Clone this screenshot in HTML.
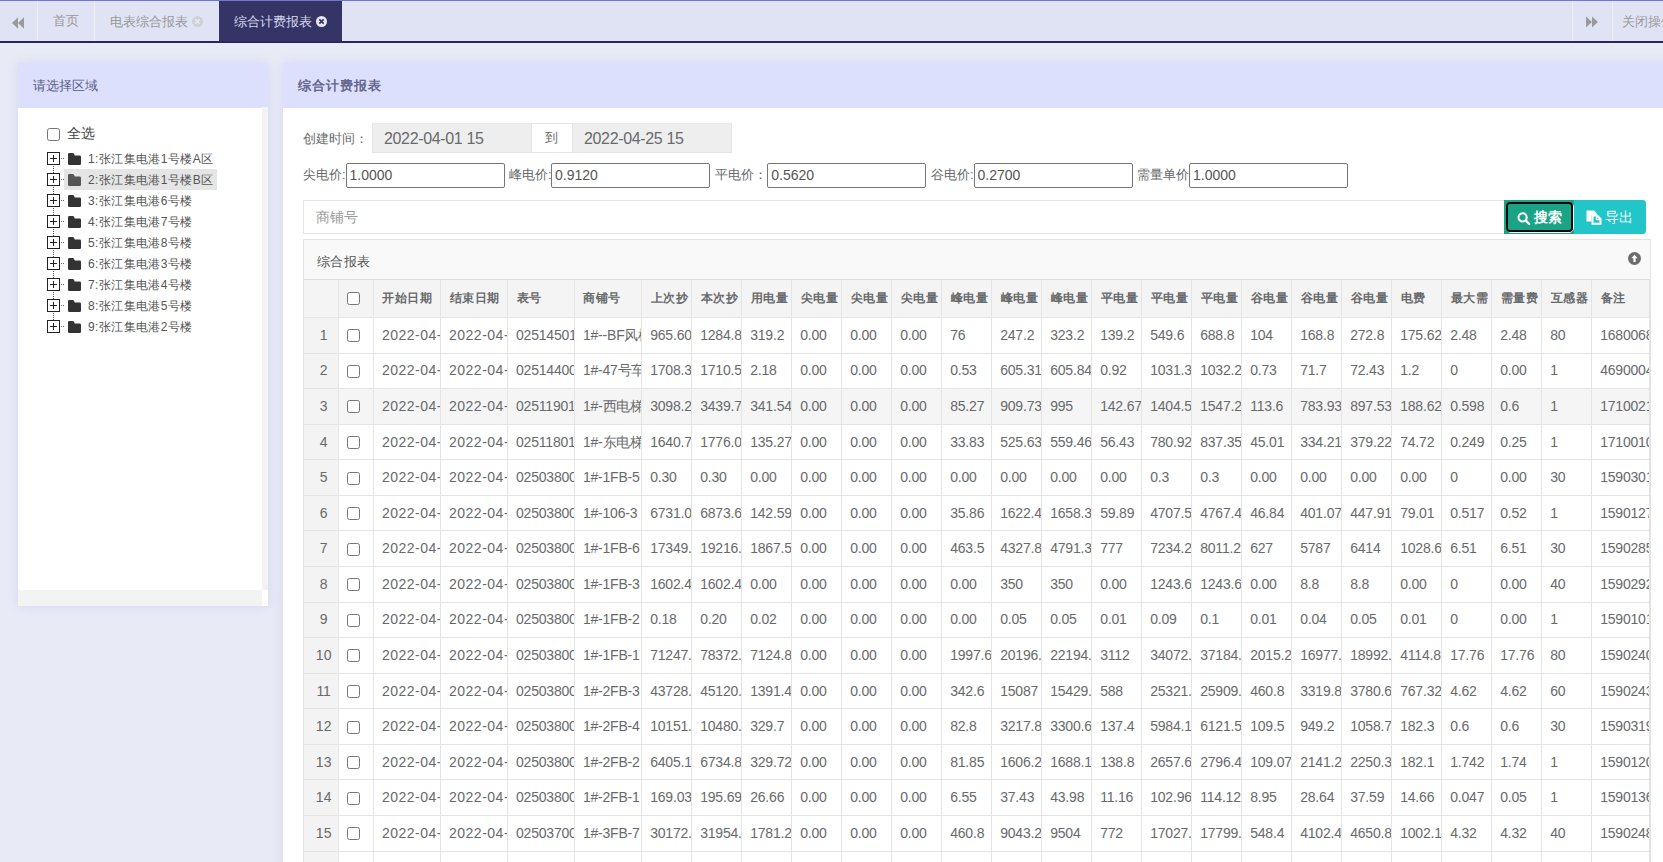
<!DOCTYPE html>
<html><head><meta charset="utf-8">
<style>
*{box-sizing:border-box;margin:0;padding:0}
html,body{width:1663px;height:862px;overflow:hidden;background:#e8eaf6;font-family:"Liberation Sans",sans-serif;color:#676a6c;font-size:14px}
.abs{position:absolute}
.nw{white-space:nowrap}
</style></head><body>

<div class="abs" style="left:0;top:0;width:1663px;height:1px;background:#7275d4"></div>
<div class="abs" style="left:0;top:1px;width:1663px;height:40px;background:#e0e3f4"></div>
<div class="abs" style="left:0;top:41px;width:1663px;height:2px;background:#27275e"></div>
<div class="abs" style="left:37px;top:1px;width:1px;height:40px;background:#eeeef2"></div>
<div class="abs" style="left:94px;top:1px;width:1px;height:40px;background:#eeeef2"></div>
<div class="abs" style="left:1572px;top:1px;width:1px;height:40px;background:#eeeef2"></div>
<div class="abs" style="left:1612px;top:1px;width:1px;height:40px;background:#eeeef2"></div>
<div class="abs" style="left:219px;top:1px;width:123px;height:40px;background:#343467"></div>
<svg class="abs" style="left:11.8px;top:16.5px" width="13" height="12" viewBox="0 0 13 12"><path d="M0 6 L6 0.3 V11.7 Z M6 6 L12 0.3 V11.7 Z" fill="#9a9a9a"/></svg>
<svg class="abs" style="left:1585px;top:16px" width="13" height="12" viewBox="0 0 13 12"><path d="M13 6 L7 0.5 V11.5 Z M7 6 L1 0.5 V11.5 Z" fill="#9a9a9a"/></svg>
<div class="abs nw" style="left:53px;top:12px;font-size:13px;line-height:18px;color:#999">首页</div>
<div class="abs nw" style="left:110px;top:12.5px;font-size:13px;line-height:18px;color:#999">电表综合报表</div>
<div class="abs" style="left:191.5px;top:15.5px;width:11px;height:11px;border-radius:50%;background:#cfd0d8"></div>
<svg class="abs" style="left:191.5px;top:15.5px" width="11" height="11" viewBox="0 0 11 11"><path d="M3.3 3.3 L7.7 7.7 M7.7 3.3 L3.3 7.7" stroke="#e8e9f2" stroke-width="1.6"/></svg>
<div class="abs nw" style="left:234px;top:12.5px;font-size:13px;line-height:18px;color:#d6d8ea">综合计费报表</div>
<div class="abs" style="left:316px;top:15.5px;width:11px;height:11px;border-radius:50%;background:#e6e7f0"></div>
<svg class="abs" style="left:316px;top:15.5px" width="11" height="11" viewBox="0 0 11 11"><path d="M3.3 3.3 L7.7 7.7 M7.7 3.3 L3.3 7.7" stroke="#343467" stroke-width="1.7"/></svg>
<div class="abs nw" style="left:1622px;top:13px;font-size:13px;line-height:18px;color:#999">关闭操作</div>
<div class="abs" style="left:18px;top:63px;width:250px;height:543px;background:#fff;box-shadow:0 0 10px rgba(120,126,220,0.16)"></div>
<div class="abs" style="left:18px;top:63px;width:250px;height:44.5px;background:#dde0fc"></div>
<div class="abs nw" style="left:33px;top:77px;font-size:13px;line-height:18px;color:#595b88">请选择区域</div>
<div class="abs" style="left:262px;top:107px;width:6px;height:483px;background:#f3f3f3"></div>
<div class="abs" style="left:18px;top:590px;width:244px;height:16px;background:#f3f3f3"></div>
<div class="abs" style="left:47px;top:128px;width:13px;height:13px;border:1px solid #767676;border-radius:2.5px;background:#fff"></div>
<div class="abs nw" style="left:67px;top:124px;font-size:14px;line-height:18px;color:#444">全选</div>
<div class="abs" style="left:47px;top:152px;width:13px;height:13px;border:1.4px solid #222;background:#fff"></div>
<div class="abs" style="left:50px;top:158px;width:7px;height:1.2px;background:#222"></div>
<div class="abs" style="left:53px;top:155px;width:1.2px;height:7px;background:#222"></div>
<div class="abs" style="left:61px;top:158px;width:1px;height:1px;background:#666"></div>
<div class="abs" style="left:63px;top:158px;width:1px;height:1px;background:#666"></div>
<div class="abs" style="left:53px;top:166px;width:0;height:7px;border-left:1px dotted #555"></div>
<svg class="abs" style="left:68px;top:153px" width="13" height="12" viewBox="0 0 13 12"><path d="M1.3 0 H4.6 Q5.6 0 6.1 1 L6.7 2.6 H11.7 Q13 2.6 13 3.9 V10.7 Q13 12 11.7 12 H1.3 Q0 12 0 10.7 V1.3 Q0 0 1.3 0 Z" fill="#333"/></svg>
<div class="abs nw" style="left:88px;top:149.5px;font-size:12px;letter-spacing:0.4px;line-height:18px;color:#555">1:张江集电港1号楼A区</div>
<div class="abs" style="left:64px;top:169px;width:153px;height:21px;background:#e5e5e5"></div>
<div class="abs" style="left:47px;top:173px;width:13px;height:13px;border:1.4px solid #222;background:#fff"></div>
<div class="abs" style="left:50px;top:179px;width:7px;height:1.2px;background:#222"></div>
<div class="abs" style="left:53px;top:176px;width:1.2px;height:7px;background:#222"></div>
<div class="abs" style="left:61px;top:179px;width:1px;height:1px;background:#666"></div>
<div class="abs" style="left:63px;top:179px;width:1px;height:1px;background:#666"></div>
<div class="abs" style="left:53px;top:187px;width:0;height:7px;border-left:1px dotted #555"></div>
<svg class="abs" style="left:68px;top:174px" width="13" height="12" viewBox="0 0 13 12"><path d="M1.3 0 H4.6 Q5.6 0 6.1 1 L6.7 2.6 H11.7 Q13 2.6 13 3.9 V10.7 Q13 12 11.7 12 H1.3 Q0 12 0 10.7 V1.3 Q0 0 1.3 0 Z" fill="#555"/></svg>
<div class="abs nw" style="left:88px;top:170.5px;font-size:12px;letter-spacing:0.4px;line-height:18px;color:#555">2:张江集电港1号楼B区</div>
<div class="abs" style="left:47px;top:194px;width:13px;height:13px;border:1.4px solid #222;background:#fff"></div>
<div class="abs" style="left:50px;top:200px;width:7px;height:1.2px;background:#222"></div>
<div class="abs" style="left:53px;top:197px;width:1.2px;height:7px;background:#222"></div>
<div class="abs" style="left:61px;top:200px;width:1px;height:1px;background:#666"></div>
<div class="abs" style="left:63px;top:200px;width:1px;height:1px;background:#666"></div>
<div class="abs" style="left:53px;top:208px;width:0;height:7px;border-left:1px dotted #555"></div>
<svg class="abs" style="left:68px;top:195px" width="13" height="12" viewBox="0 0 13 12"><path d="M1.3 0 H4.6 Q5.6 0 6.1 1 L6.7 2.6 H11.7 Q13 2.6 13 3.9 V10.7 Q13 12 11.7 12 H1.3 Q0 12 0 10.7 V1.3 Q0 0 1.3 0 Z" fill="#333"/></svg>
<div class="abs nw" style="left:88px;top:191.5px;font-size:12px;letter-spacing:0.4px;line-height:18px;color:#555">3:张江集电港6号楼</div>
<div class="abs" style="left:47px;top:215px;width:13px;height:13px;border:1.4px solid #222;background:#fff"></div>
<div class="abs" style="left:50px;top:221px;width:7px;height:1.2px;background:#222"></div>
<div class="abs" style="left:53px;top:218px;width:1.2px;height:7px;background:#222"></div>
<div class="abs" style="left:61px;top:221px;width:1px;height:1px;background:#666"></div>
<div class="abs" style="left:63px;top:221px;width:1px;height:1px;background:#666"></div>
<div class="abs" style="left:53px;top:229px;width:0;height:7px;border-left:1px dotted #555"></div>
<svg class="abs" style="left:68px;top:216px" width="13" height="12" viewBox="0 0 13 12"><path d="M1.3 0 H4.6 Q5.6 0 6.1 1 L6.7 2.6 H11.7 Q13 2.6 13 3.9 V10.7 Q13 12 11.7 12 H1.3 Q0 12 0 10.7 V1.3 Q0 0 1.3 0 Z" fill="#333"/></svg>
<div class="abs nw" style="left:88px;top:212.5px;font-size:12px;letter-spacing:0.4px;line-height:18px;color:#555">4:张江集电港7号楼</div>
<div class="abs" style="left:47px;top:236px;width:13px;height:13px;border:1.4px solid #222;background:#fff"></div>
<div class="abs" style="left:50px;top:242px;width:7px;height:1.2px;background:#222"></div>
<div class="abs" style="left:53px;top:239px;width:1.2px;height:7px;background:#222"></div>
<div class="abs" style="left:61px;top:242px;width:1px;height:1px;background:#666"></div>
<div class="abs" style="left:63px;top:242px;width:1px;height:1px;background:#666"></div>
<div class="abs" style="left:53px;top:250px;width:0;height:7px;border-left:1px dotted #555"></div>
<svg class="abs" style="left:68px;top:237px" width="13" height="12" viewBox="0 0 13 12"><path d="M1.3 0 H4.6 Q5.6 0 6.1 1 L6.7 2.6 H11.7 Q13 2.6 13 3.9 V10.7 Q13 12 11.7 12 H1.3 Q0 12 0 10.7 V1.3 Q0 0 1.3 0 Z" fill="#333"/></svg>
<div class="abs nw" style="left:88px;top:233.5px;font-size:12px;letter-spacing:0.4px;line-height:18px;color:#555">5:张江集电港8号楼</div>
<div class="abs" style="left:47px;top:257px;width:13px;height:13px;border:1.4px solid #222;background:#fff"></div>
<div class="abs" style="left:50px;top:263px;width:7px;height:1.2px;background:#222"></div>
<div class="abs" style="left:53px;top:260px;width:1.2px;height:7px;background:#222"></div>
<div class="abs" style="left:61px;top:263px;width:1px;height:1px;background:#666"></div>
<div class="abs" style="left:63px;top:263px;width:1px;height:1px;background:#666"></div>
<div class="abs" style="left:53px;top:271px;width:0;height:7px;border-left:1px dotted #555"></div>
<svg class="abs" style="left:68px;top:258px" width="13" height="12" viewBox="0 0 13 12"><path d="M1.3 0 H4.6 Q5.6 0 6.1 1 L6.7 2.6 H11.7 Q13 2.6 13 3.9 V10.7 Q13 12 11.7 12 H1.3 Q0 12 0 10.7 V1.3 Q0 0 1.3 0 Z" fill="#333"/></svg>
<div class="abs nw" style="left:88px;top:254.5px;font-size:12px;letter-spacing:0.4px;line-height:18px;color:#555">6:张江集电港3号楼</div>
<div class="abs" style="left:47px;top:278px;width:13px;height:13px;border:1.4px solid #222;background:#fff"></div>
<div class="abs" style="left:50px;top:284px;width:7px;height:1.2px;background:#222"></div>
<div class="abs" style="left:53px;top:281px;width:1.2px;height:7px;background:#222"></div>
<div class="abs" style="left:61px;top:284px;width:1px;height:1px;background:#666"></div>
<div class="abs" style="left:63px;top:284px;width:1px;height:1px;background:#666"></div>
<div class="abs" style="left:53px;top:292px;width:0;height:7px;border-left:1px dotted #555"></div>
<svg class="abs" style="left:68px;top:279px" width="13" height="12" viewBox="0 0 13 12"><path d="M1.3 0 H4.6 Q5.6 0 6.1 1 L6.7 2.6 H11.7 Q13 2.6 13 3.9 V10.7 Q13 12 11.7 12 H1.3 Q0 12 0 10.7 V1.3 Q0 0 1.3 0 Z" fill="#333"/></svg>
<div class="abs nw" style="left:88px;top:275.5px;font-size:12px;letter-spacing:0.4px;line-height:18px;color:#555">7:张江集电港4号楼</div>
<div class="abs" style="left:47px;top:299px;width:13px;height:13px;border:1.4px solid #222;background:#fff"></div>
<div class="abs" style="left:50px;top:305px;width:7px;height:1.2px;background:#222"></div>
<div class="abs" style="left:53px;top:302px;width:1.2px;height:7px;background:#222"></div>
<div class="abs" style="left:61px;top:305px;width:1px;height:1px;background:#666"></div>
<div class="abs" style="left:63px;top:305px;width:1px;height:1px;background:#666"></div>
<div class="abs" style="left:53px;top:313px;width:0;height:7px;border-left:1px dotted #555"></div>
<svg class="abs" style="left:68px;top:300px" width="13" height="12" viewBox="0 0 13 12"><path d="M1.3 0 H4.6 Q5.6 0 6.1 1 L6.7 2.6 H11.7 Q13 2.6 13 3.9 V10.7 Q13 12 11.7 12 H1.3 Q0 12 0 10.7 V1.3 Q0 0 1.3 0 Z" fill="#333"/></svg>
<div class="abs nw" style="left:88px;top:296.5px;font-size:12px;letter-spacing:0.4px;line-height:18px;color:#555">8:张江集电港5号楼</div>
<div class="abs" style="left:47px;top:320px;width:13px;height:13px;border:1.4px solid #222;background:#fff"></div>
<div class="abs" style="left:50px;top:326px;width:7px;height:1.2px;background:#222"></div>
<div class="abs" style="left:53px;top:323px;width:1.2px;height:7px;background:#222"></div>
<div class="abs" style="left:61px;top:326px;width:1px;height:1px;background:#666"></div>
<div class="abs" style="left:63px;top:326px;width:1px;height:1px;background:#666"></div>
<svg class="abs" style="left:68px;top:321px" width="13" height="12" viewBox="0 0 13 12"><path d="M1.3 0 H4.6 Q5.6 0 6.1 1 L6.7 2.6 H11.7 Q13 2.6 13 3.9 V10.7 Q13 12 11.7 12 H1.3 Q0 12 0 10.7 V1.3 Q0 0 1.3 0 Z" fill="#333"/></svg>
<div class="abs nw" style="left:88px;top:317.5px;font-size:12px;letter-spacing:0.4px;line-height:18px;color:#555">9:张江集电港2号楼</div>
<div class="abs" style="left:283px;top:63px;width:1400px;height:820px;background:#fff;box-shadow:0 0 10px rgba(120,126,220,0.16)"></div>
<div class="abs" style="left:283px;top:63px;width:1400px;height:44.5px;background:#dde0fc"></div>
<div class="abs nw" style="left:298px;top:76.5px;font-size:13px;letter-spacing:1px;line-height:18px;font-weight:bold;color:#64678f">综合计费报表</div>
<div class="abs nw" style="left:303px;top:130px;font-size:13px;line-height:18px;color:#676a6c">创建时间：</div>
<div class="abs" style="left:372px;top:123px;width:160px;height:30px;background:#eee;border:1px solid #e5e6e7"></div>
<div class="abs nw" style="left:384px;top:128.5px;font-size:16px;letter-spacing:-0.35px;line-height:20px;color:#676a6c">2022-04-01 15</div>
<div class="abs" style="left:531px;top:123px;width:42px;height:30px;background:#fff;border:1px solid #e5e6e7"></div>
<div class="abs nw" style="left:545px;top:129px;font-size:13px;line-height:18px;color:#676a6c">到</div>
<div class="abs" style="left:572px;top:123px;width:160px;height:30px;background:#eee;border:1px solid #e5e6e7"></div>
<div class="abs nw" style="left:584px;top:128.5px;font-size:16px;letter-spacing:-0.35px;line-height:20px;color:#676a6c">2022-04-25 15</div>
<div class="abs nw" style="left:303px;top:166px;font-size:13px;line-height:18px;color:#676a6c">尖电价:</div>
<div class="abs" style="left:345.5px;top:163px;width:159px;height:25px;border:1px solid #767676;border-radius:2px;background:#fff"></div>
<div class="abs nw" style="left:349.5px;top:166px;font-size:14px;line-height:18px;color:#555">1.0000</div>
<div class="abs nw" style="left:509px;top:166px;font-size:13px;line-height:18px;color:#676a6c">峰电价:</div>
<div class="abs" style="left:551px;top:163px;width:159px;height:25px;border:1px solid #767676;border-radius:2px;background:#fff"></div>
<div class="abs nw" style="left:555px;top:166px;font-size:14px;line-height:18px;color:#555">0.9120</div>
<div class="abs nw" style="left:715px;top:166px;font-size:13px;line-height:18px;color:#676a6c">平电价：</div>
<div class="abs" style="left:767.3px;top:163px;width:159px;height:25px;border:1px solid #767676;border-radius:2px;background:#fff"></div>
<div class="abs nw" style="left:771.3px;top:166px;font-size:14px;line-height:18px;color:#555">0.5620</div>
<div class="abs nw" style="left:931px;top:166px;font-size:13px;line-height:18px;color:#676a6c">谷电价:</div>
<div class="abs" style="left:973.5px;top:163px;width:159px;height:25px;border:1px solid #767676;border-radius:2px;background:#fff"></div>
<div class="abs nw" style="left:977.5px;top:166px;font-size:14px;line-height:18px;color:#555">0.2700</div>
<div class="abs nw" style="left:1136.5px;top:166px;font-size:13px;line-height:18px;color:#676a6c">需量单价</div>
<div class="abs" style="left:1189px;top:163px;width:159px;height:25px;border:1px solid #767676;border-radius:2px;background:#fff"></div>
<div class="abs nw" style="left:1193px;top:166px;font-size:14px;line-height:18px;color:#555">1.0000</div>
<div class="abs" style="left:303px;top:200px;width:1202px;height:34px;border:1px solid #e5e6e7;background:#fff"></div>
<div class="abs nw" style="left:316px;top:208px;font-size:14px;line-height:18px;color:#999">商铺号</div>
<div class="abs" style="left:1504px;top:200px;width:70px;height:34px;background:#1aa385"></div>
<div class="abs" style="left:1505.5px;top:201.5px;width:68px;height:31px;border:1px solid #fff;border-radius:5px"></div>
<div class="abs" style="left:1506px;top:202px;width:67px;height:30px;border:2px solid #0a0a0a;border-radius:4px"></div>
<svg class="abs" style="left:1516.5px;top:211.5px" width="14" height="13" viewBox="0 0 14 13"><circle cx="5.6" cy="5.4" r="4.1" stroke="#fff" stroke-width="2.1" fill="none"/><path d="M8.6 8.4 L12.2 12" stroke="#fff" stroke-width="2.4" stroke-linecap="round"/></svg>
<div class="abs nw" style="left:1534px;top:208px;font-size:14px;line-height:18px;color:#fff;font-weight:bold">搜索</div>
<div class="abs" style="left:1574px;top:200px;width:72px;height:34px;background:#23c6c8;border-radius:0 3.5px 3.5px 0"></div>
<svg class="abs" style="left:1586px;top:210px" width="16" height="15" viewBox="0 0 16 15"><path d="M0.5 0.5 H8 L10.5 3 V5 H5.5 V11.5 H0.5 Z" fill="#fff"/><path d="M6.5 5.5 H11 L14.5 9 V13.8 H6.5 Z" fill="none" stroke="#fff" stroke-width="2"/><path d="M10.5 5 V9.5 H15" fill="none" stroke="#fff" stroke-width="1.3"/></svg>
<div class="abs nw" style="left:1605px;top:208px;font-size:14px;line-height:18px;color:#fff">导出</div>
<div class="abs" style="left:303px;top:239px;width:1348px;height:640px;border:1px solid #e4e4e4;background:#fff"></div>
<div class="abs" style="left:304px;top:240px;width:1346px;height:39.6px;background:#f9f9f9;border-bottom:1px solid #dedede"></div>
<div class="abs nw" style="left:317px;top:252.5px;font-size:13px;letter-spacing:0.3px;line-height:18px;color:#555">综合报表</div>
<div class="abs" style="left:1628px;top:252px;width:13px;height:13px;border-radius:50%;background:#6b6d70"></div>
<svg class="abs" style="left:1628px;top:252px" width="13" height="13" viewBox="0 0 13 13"><path d="M6.5 2.8 L9.6 6.2 H7.6 V10 H5.4 V6.2 H3.4 Z" fill="#fff"/></svg>
<div class="abs" style="left:304px;top:280px;width:1345px;height:600px;overflow:hidden">
<div class="abs" style="left:0;top:0;width:1400px;height:37.0px;background:#f4f4f4"></div>
<div class="abs" style="left:0;top:37.0px;width:34.30000000000001px;height:600px;background:#f3f3f3"></div>
<div class="abs" style="left:34.30000000000001px;top:108.142px;width:1400px;height:35.571px;background:#f5f5f5"></div>
<div class="abs" style="left:0;top:37.00px;width:1400px;height:1px;background:#e4e4e4"></div>
<div class="abs" style="left:0;top:72.57px;width:1400px;height:1px;background:#e4e4e4"></div>
<div class="abs" style="left:0;top:108.14px;width:1400px;height:1px;background:#e4e4e4"></div>
<div class="abs" style="left:0;top:143.71px;width:1400px;height:1px;background:#e4e4e4"></div>
<div class="abs" style="left:0;top:179.28px;width:1400px;height:1px;background:#e4e4e4"></div>
<div class="abs" style="left:0;top:214.86px;width:1400px;height:1px;background:#e4e4e4"></div>
<div class="abs" style="left:0;top:250.43px;width:1400px;height:1px;background:#e4e4e4"></div>
<div class="abs" style="left:0;top:286.00px;width:1400px;height:1px;background:#e4e4e4"></div>
<div class="abs" style="left:0;top:321.57px;width:1400px;height:1px;background:#e4e4e4"></div>
<div class="abs" style="left:0;top:357.14px;width:1400px;height:1px;background:#e4e4e4"></div>
<div class="abs" style="left:0;top:392.71px;width:1400px;height:1px;background:#e4e4e4"></div>
<div class="abs" style="left:0;top:428.28px;width:1400px;height:1px;background:#e4e4e4"></div>
<div class="abs" style="left:0;top:463.85px;width:1400px;height:1px;background:#e4e4e4"></div>
<div class="abs" style="left:0;top:499.42px;width:1400px;height:1px;background:#e4e4e4"></div>
<div class="abs" style="left:0;top:534.99px;width:1400px;height:1px;background:#e4e4e4"></div>
<div class="abs" style="left:0;top:570.56px;width:1400px;height:1px;background:#e4e4e4"></div>
<div class="abs" style="left:0;top:606.14px;width:1400px;height:1px;background:#e4e4e4"></div>
<div class="abs" style="left:33.80px;top:0;width:1px;height:600px;background:#e4e4e4"></div>
<div class="abs" style="left:68.90px;top:0;width:1px;height:600px;background:#e4e4e4"></div>
<div class="abs" style="left:136.00px;top:0;width:1px;height:600px;background:#e4e4e4"></div>
<div class="abs" style="left:203.00px;top:0;width:1px;height:600px;background:#e4e4e4"></div>
<div class="abs" style="left:269.90px;top:0;width:1px;height:600px;background:#e4e4e4"></div>
<div class="abs" style="left:337.20px;top:0;width:1px;height:600px;background:#e4e4e4"></div>
<div class="abs" style="left:387.20px;top:0;width:1px;height:600px;background:#e4e4e4"></div>
<div class="abs" style="left:437.20px;top:0;width:1px;height:600px;background:#e4e4e4"></div>
<div class="abs" style="left:487.20px;top:0;width:1px;height:600px;background:#e4e4e4"></div>
<div class="abs" style="left:537.20px;top:0;width:1px;height:600px;background:#e4e4e4"></div>
<div class="abs" style="left:587.20px;top:0;width:1px;height:600px;background:#e4e4e4"></div>
<div class="abs" style="left:637.20px;top:0;width:1px;height:600px;background:#e4e4e4"></div>
<div class="abs" style="left:687.20px;top:0;width:1px;height:600px;background:#e4e4e4"></div>
<div class="abs" style="left:737.20px;top:0;width:1px;height:600px;background:#e4e4e4"></div>
<div class="abs" style="left:787.20px;top:0;width:1px;height:600px;background:#e4e4e4"></div>
<div class="abs" style="left:837.20px;top:0;width:1px;height:600px;background:#e4e4e4"></div>
<div class="abs" style="left:887.20px;top:0;width:1px;height:600px;background:#e4e4e4"></div>
<div class="abs" style="left:937.20px;top:0;width:1px;height:600px;background:#e4e4e4"></div>
<div class="abs" style="left:987.20px;top:0;width:1px;height:600px;background:#e4e4e4"></div>
<div class="abs" style="left:1037.20px;top:0;width:1px;height:600px;background:#e4e4e4"></div>
<div class="abs" style="left:1087.20px;top:0;width:1px;height:600px;background:#e4e4e4"></div>
<div class="abs" style="left:1137.20px;top:0;width:1px;height:600px;background:#e4e4e4"></div>
<div class="abs" style="left:1187.20px;top:0;width:1px;height:600px;background:#e4e4e4"></div>
<div class="abs" style="left:1237.20px;top:0;width:1px;height:600px;background:#e4e4e4"></div>
<div class="abs" style="left:1287.20px;top:0;width:1px;height:600px;background:#e4e4e4"></div>
<div class="abs" style="left:43px;top:12px;width:13px;height:13px;border:1px solid #767676;border-radius:2.5px;background:#fff"></div>
<div class="abs nw" style="left:78.40px;top:8.90px;font-size:12px;letter-spacing:0.5px;line-height:18px;font-weight:bold;color:#676a6c">开始日期</div>
<div class="abs nw" style="left:145.50px;top:8.90px;font-size:12px;letter-spacing:0.5px;line-height:18px;font-weight:bold;color:#676a6c">结束日期</div>
<div class="abs nw" style="left:212.50px;top:8.90px;font-size:12px;letter-spacing:0.5px;line-height:18px;font-weight:bold;color:#676a6c">表号</div>
<div class="abs nw" style="left:279.40px;top:8.90px;font-size:12px;letter-spacing:0.5px;line-height:18px;font-weight:bold;color:#676a6c">商铺号</div>
<div class="abs nw" style="left:346.70px;top:8.90px;font-size:12px;letter-spacing:0.5px;line-height:18px;font-weight:bold;color:#676a6c">上次抄</div>
<div class="abs nw" style="left:396.70px;top:8.90px;font-size:12px;letter-spacing:0.5px;line-height:18px;font-weight:bold;color:#676a6c">本次抄</div>
<div class="abs nw" style="left:446.70px;top:8.90px;font-size:12px;letter-spacing:0.5px;line-height:18px;font-weight:bold;color:#676a6c">用电量</div>
<div class="abs nw" style="left:496.70px;top:8.90px;font-size:12px;letter-spacing:0.5px;line-height:18px;font-weight:bold;color:#676a6c">尖电量</div>
<div class="abs nw" style="left:546.70px;top:8.90px;font-size:12px;letter-spacing:0.5px;line-height:18px;font-weight:bold;color:#676a6c">尖电量</div>
<div class="abs nw" style="left:596.70px;top:8.90px;font-size:12px;letter-spacing:0.5px;line-height:18px;font-weight:bold;color:#676a6c">尖电量</div>
<div class="abs nw" style="left:646.70px;top:8.90px;font-size:12px;letter-spacing:0.5px;line-height:18px;font-weight:bold;color:#676a6c">峰电量</div>
<div class="abs nw" style="left:696.70px;top:8.90px;font-size:12px;letter-spacing:0.5px;line-height:18px;font-weight:bold;color:#676a6c">峰电量</div>
<div class="abs nw" style="left:746.70px;top:8.90px;font-size:12px;letter-spacing:0.5px;line-height:18px;font-weight:bold;color:#676a6c">峰电量</div>
<div class="abs nw" style="left:796.70px;top:8.90px;font-size:12px;letter-spacing:0.5px;line-height:18px;font-weight:bold;color:#676a6c">平电量</div>
<div class="abs nw" style="left:846.70px;top:8.90px;font-size:12px;letter-spacing:0.5px;line-height:18px;font-weight:bold;color:#676a6c">平电量</div>
<div class="abs nw" style="left:896.70px;top:8.90px;font-size:12px;letter-spacing:0.5px;line-height:18px;font-weight:bold;color:#676a6c">平电量</div>
<div class="abs nw" style="left:946.70px;top:8.90px;font-size:12px;letter-spacing:0.5px;line-height:18px;font-weight:bold;color:#676a6c">谷电量</div>
<div class="abs nw" style="left:996.70px;top:8.90px;font-size:12px;letter-spacing:0.5px;line-height:18px;font-weight:bold;color:#676a6c">谷电量</div>
<div class="abs nw" style="left:1046.70px;top:8.90px;font-size:12px;letter-spacing:0.5px;line-height:18px;font-weight:bold;color:#676a6c">谷电量</div>
<div class="abs nw" style="left:1096.70px;top:8.90px;font-size:12px;letter-spacing:0.5px;line-height:18px;font-weight:bold;color:#676a6c">电费</div>
<div class="abs nw" style="left:1146.70px;top:8.90px;font-size:12px;letter-spacing:0.5px;line-height:18px;font-weight:bold;color:#676a6c">最大需</div>
<div class="abs nw" style="left:1196.70px;top:8.90px;font-size:12px;letter-spacing:0.5px;line-height:18px;font-weight:bold;color:#676a6c">需量费</div>
<div class="abs nw" style="left:1246.70px;top:8.90px;font-size:12px;letter-spacing:0.5px;line-height:18px;font-weight:bold;color:#676a6c">互感器</div>
<div class="abs nw" style="left:1296.70px;top:8.90px;font-size:12px;letter-spacing:0.5px;line-height:18px;font-weight:bold;color:#676a6c">备注</div>
<div class="abs nw" style="left:5.00px;width:29.30px;text-align:center;top:45.79px;font-size:14px;line-height:18px;color:#676a6c">1</div>
<div class="abs" style="left:43px;top:49.28550000000001px;width:13px;height:13px;border:1px solid #767676;border-radius:2.5px;background:#fff"></div>
<div class="abs nw" style="left:69.90px;width:66.10px;overflow:hidden;padding-left:8px;letter-spacing:0.5px;top:45.79px;font-size:14px;line-height:18px;color:#676a6c">2022-04-01</div>
<div class="abs nw" style="left:137.00px;width:66.00px;overflow:hidden;padding-left:8px;letter-spacing:0.5px;top:45.79px;font-size:14px;line-height:18px;color:#676a6c">2022-04-</div>
<div class="abs nw" style="left:204.00px;width:65.90px;overflow:hidden;padding-left:8px;letter-spacing:-0.2px;top:45.79px;font-size:14px;line-height:18px;color:#676a6c">02514501</div>
<div class="abs nw" style="left:270.90px;width:66.30px;overflow:hidden;padding-left:8px;letter-spacing:-0.2px;top:45.79px;font-size:14px;line-height:18px;color:#676a6c">1#--BF风机</div>
<div class="abs nw" style="left:338.20px;width:49.00px;overflow:hidden;padding-left:8px;letter-spacing:-0.2px;top:45.79px;font-size:14px;line-height:18px;color:#676a6c">965.60</div>
<div class="abs nw" style="left:388.20px;width:49.00px;overflow:hidden;padding-left:8px;letter-spacing:-0.2px;top:45.79px;font-size:14px;line-height:18px;color:#676a6c">1284.8</div>
<div class="abs nw" style="left:438.20px;width:49.00px;overflow:hidden;padding-left:8px;letter-spacing:-0.2px;top:45.79px;font-size:14px;line-height:18px;color:#676a6c">319.2</div>
<div class="abs nw" style="left:488.20px;width:49.00px;overflow:hidden;padding-left:8px;letter-spacing:-0.2px;top:45.79px;font-size:14px;line-height:18px;color:#676a6c">0.00</div>
<div class="abs nw" style="left:538.20px;width:49.00px;overflow:hidden;padding-left:8px;letter-spacing:-0.2px;top:45.79px;font-size:14px;line-height:18px;color:#676a6c">0.00</div>
<div class="abs nw" style="left:588.20px;width:49.00px;overflow:hidden;padding-left:8px;letter-spacing:-0.2px;top:45.79px;font-size:14px;line-height:18px;color:#676a6c">0.00</div>
<div class="abs nw" style="left:638.20px;width:49.00px;overflow:hidden;padding-left:8px;letter-spacing:-0.2px;top:45.79px;font-size:14px;line-height:18px;color:#676a6c">76</div>
<div class="abs nw" style="left:688.20px;width:49.00px;overflow:hidden;padding-left:8px;letter-spacing:-0.2px;top:45.79px;font-size:14px;line-height:18px;color:#676a6c">247.2</div>
<div class="abs nw" style="left:738.20px;width:49.00px;overflow:hidden;padding-left:8px;letter-spacing:-0.2px;top:45.79px;font-size:14px;line-height:18px;color:#676a6c">323.2</div>
<div class="abs nw" style="left:788.20px;width:49.00px;overflow:hidden;padding-left:8px;letter-spacing:-0.2px;top:45.79px;font-size:14px;line-height:18px;color:#676a6c">139.2</div>
<div class="abs nw" style="left:838.20px;width:49.00px;overflow:hidden;padding-left:8px;letter-spacing:-0.2px;top:45.79px;font-size:14px;line-height:18px;color:#676a6c">549.6</div>
<div class="abs nw" style="left:888.20px;width:49.00px;overflow:hidden;padding-left:8px;letter-spacing:-0.2px;top:45.79px;font-size:14px;line-height:18px;color:#676a6c">688.8</div>
<div class="abs nw" style="left:938.20px;width:49.00px;overflow:hidden;padding-left:8px;letter-spacing:-0.2px;top:45.79px;font-size:14px;line-height:18px;color:#676a6c">104</div>
<div class="abs nw" style="left:988.20px;width:49.00px;overflow:hidden;padding-left:8px;letter-spacing:-0.2px;top:45.79px;font-size:14px;line-height:18px;color:#676a6c">168.8</div>
<div class="abs nw" style="left:1038.20px;width:49.00px;overflow:hidden;padding-left:8px;letter-spacing:-0.2px;top:45.79px;font-size:14px;line-height:18px;color:#676a6c">272.8</div>
<div class="abs nw" style="left:1088.20px;width:49.00px;overflow:hidden;padding-left:8px;letter-spacing:-0.2px;top:45.79px;font-size:14px;line-height:18px;color:#676a6c">175.62</div>
<div class="abs nw" style="left:1138.20px;width:49.00px;overflow:hidden;padding-left:8px;letter-spacing:-0.2px;top:45.79px;font-size:14px;line-height:18px;color:#676a6c">2.48</div>
<div class="abs nw" style="left:1188.20px;width:49.00px;overflow:hidden;padding-left:8px;letter-spacing:-0.2px;top:45.79px;font-size:14px;line-height:18px;color:#676a6c">2.48</div>
<div class="abs nw" style="left:1238.20px;width:49.00px;overflow:hidden;padding-left:8px;letter-spacing:-0.2px;top:45.79px;font-size:14px;line-height:18px;color:#676a6c">80</div>
<div class="abs nw" style="left:1288.20px;width:127.30px;overflow:hidden;padding-left:8px;letter-spacing:-0.2px;top:45.79px;font-size:14px;line-height:18px;color:#676a6c">1680068</div>
<div class="abs nw" style="left:5.00px;width:29.30px;text-align:center;top:81.36px;font-size:14px;line-height:18px;color:#676a6c">2</div>
<div class="abs" style="left:43px;top:84.85650000000004px;width:13px;height:13px;border:1px solid #767676;border-radius:2.5px;background:#fff"></div>
<div class="abs nw" style="left:69.90px;width:66.10px;overflow:hidden;padding-left:8px;letter-spacing:0.5px;top:81.36px;font-size:14px;line-height:18px;color:#676a6c">2022-04-01</div>
<div class="abs nw" style="left:137.00px;width:66.00px;overflow:hidden;padding-left:8px;letter-spacing:0.5px;top:81.36px;font-size:14px;line-height:18px;color:#676a6c">2022-04-</div>
<div class="abs nw" style="left:204.00px;width:65.90px;overflow:hidden;padding-left:8px;letter-spacing:-0.2px;top:81.36px;font-size:14px;line-height:18px;color:#676a6c">02514400</div>
<div class="abs nw" style="left:270.90px;width:66.30px;overflow:hidden;padding-left:8px;letter-spacing:-0.2px;top:81.36px;font-size:14px;line-height:18px;color:#676a6c">1#-47号车</div>
<div class="abs nw" style="left:338.20px;width:49.00px;overflow:hidden;padding-left:8px;letter-spacing:-0.2px;top:81.36px;font-size:14px;line-height:18px;color:#676a6c">1708.3</div>
<div class="abs nw" style="left:388.20px;width:49.00px;overflow:hidden;padding-left:8px;letter-spacing:-0.2px;top:81.36px;font-size:14px;line-height:18px;color:#676a6c">1710.5</div>
<div class="abs nw" style="left:438.20px;width:49.00px;overflow:hidden;padding-left:8px;letter-spacing:-0.2px;top:81.36px;font-size:14px;line-height:18px;color:#676a6c">2.18</div>
<div class="abs nw" style="left:488.20px;width:49.00px;overflow:hidden;padding-left:8px;letter-spacing:-0.2px;top:81.36px;font-size:14px;line-height:18px;color:#676a6c">0.00</div>
<div class="abs nw" style="left:538.20px;width:49.00px;overflow:hidden;padding-left:8px;letter-spacing:-0.2px;top:81.36px;font-size:14px;line-height:18px;color:#676a6c">0.00</div>
<div class="abs nw" style="left:588.20px;width:49.00px;overflow:hidden;padding-left:8px;letter-spacing:-0.2px;top:81.36px;font-size:14px;line-height:18px;color:#676a6c">0.00</div>
<div class="abs nw" style="left:638.20px;width:49.00px;overflow:hidden;padding-left:8px;letter-spacing:-0.2px;top:81.36px;font-size:14px;line-height:18px;color:#676a6c">0.53</div>
<div class="abs nw" style="left:688.20px;width:49.00px;overflow:hidden;padding-left:8px;letter-spacing:-0.2px;top:81.36px;font-size:14px;line-height:18px;color:#676a6c">605.31</div>
<div class="abs nw" style="left:738.20px;width:49.00px;overflow:hidden;padding-left:8px;letter-spacing:-0.2px;top:81.36px;font-size:14px;line-height:18px;color:#676a6c">605.84</div>
<div class="abs nw" style="left:788.20px;width:49.00px;overflow:hidden;padding-left:8px;letter-spacing:-0.2px;top:81.36px;font-size:14px;line-height:18px;color:#676a6c">0.92</div>
<div class="abs nw" style="left:838.20px;width:49.00px;overflow:hidden;padding-left:8px;letter-spacing:-0.2px;top:81.36px;font-size:14px;line-height:18px;color:#676a6c">1031.3</div>
<div class="abs nw" style="left:888.20px;width:49.00px;overflow:hidden;padding-left:8px;letter-spacing:-0.2px;top:81.36px;font-size:14px;line-height:18px;color:#676a6c">1032.2</div>
<div class="abs nw" style="left:938.20px;width:49.00px;overflow:hidden;padding-left:8px;letter-spacing:-0.2px;top:81.36px;font-size:14px;line-height:18px;color:#676a6c">0.73</div>
<div class="abs nw" style="left:988.20px;width:49.00px;overflow:hidden;padding-left:8px;letter-spacing:-0.2px;top:81.36px;font-size:14px;line-height:18px;color:#676a6c">71.7</div>
<div class="abs nw" style="left:1038.20px;width:49.00px;overflow:hidden;padding-left:8px;letter-spacing:-0.2px;top:81.36px;font-size:14px;line-height:18px;color:#676a6c">72.43</div>
<div class="abs nw" style="left:1088.20px;width:49.00px;overflow:hidden;padding-left:8px;letter-spacing:-0.2px;top:81.36px;font-size:14px;line-height:18px;color:#676a6c">1.2</div>
<div class="abs nw" style="left:1138.20px;width:49.00px;overflow:hidden;padding-left:8px;letter-spacing:-0.2px;top:81.36px;font-size:14px;line-height:18px;color:#676a6c">0</div>
<div class="abs nw" style="left:1188.20px;width:49.00px;overflow:hidden;padding-left:8px;letter-spacing:-0.2px;top:81.36px;font-size:14px;line-height:18px;color:#676a6c">0.00</div>
<div class="abs nw" style="left:1238.20px;width:49.00px;overflow:hidden;padding-left:8px;letter-spacing:-0.2px;top:81.36px;font-size:14px;line-height:18px;color:#676a6c">1</div>
<div class="abs nw" style="left:1288.20px;width:127.30px;overflow:hidden;padding-left:8px;letter-spacing:-0.2px;top:81.36px;font-size:14px;line-height:18px;color:#676a6c">4690004</div>
<div class="abs nw" style="left:5.00px;width:29.30px;text-align:center;top:116.93px;font-size:14px;line-height:18px;color:#676a6c">3</div>
<div class="abs" style="left:43px;top:120.42750000000001px;width:13px;height:13px;border:1px solid #767676;border-radius:2.5px;background:#fff"></div>
<div class="abs nw" style="left:69.90px;width:66.10px;overflow:hidden;padding-left:8px;letter-spacing:0.5px;top:116.93px;font-size:14px;line-height:18px;color:#676a6c">2022-04-01</div>
<div class="abs nw" style="left:137.00px;width:66.00px;overflow:hidden;padding-left:8px;letter-spacing:0.5px;top:116.93px;font-size:14px;line-height:18px;color:#676a6c">2022-04-</div>
<div class="abs nw" style="left:204.00px;width:65.90px;overflow:hidden;padding-left:8px;letter-spacing:-0.2px;top:116.93px;font-size:14px;line-height:18px;color:#676a6c">02511901</div>
<div class="abs nw" style="left:270.90px;width:66.30px;overflow:hidden;padding-left:8px;letter-spacing:-0.2px;top:116.93px;font-size:14px;line-height:18px;color:#676a6c">1#-西电梯</div>
<div class="abs nw" style="left:338.20px;width:49.00px;overflow:hidden;padding-left:8px;letter-spacing:-0.2px;top:116.93px;font-size:14px;line-height:18px;color:#676a6c">3098.2</div>
<div class="abs nw" style="left:388.20px;width:49.00px;overflow:hidden;padding-left:8px;letter-spacing:-0.2px;top:116.93px;font-size:14px;line-height:18px;color:#676a6c">3439.7</div>
<div class="abs nw" style="left:438.20px;width:49.00px;overflow:hidden;padding-left:8px;letter-spacing:-0.2px;top:116.93px;font-size:14px;line-height:18px;color:#676a6c">341.54</div>
<div class="abs nw" style="left:488.20px;width:49.00px;overflow:hidden;padding-left:8px;letter-spacing:-0.2px;top:116.93px;font-size:14px;line-height:18px;color:#676a6c">0.00</div>
<div class="abs nw" style="left:538.20px;width:49.00px;overflow:hidden;padding-left:8px;letter-spacing:-0.2px;top:116.93px;font-size:14px;line-height:18px;color:#676a6c">0.00</div>
<div class="abs nw" style="left:588.20px;width:49.00px;overflow:hidden;padding-left:8px;letter-spacing:-0.2px;top:116.93px;font-size:14px;line-height:18px;color:#676a6c">0.00</div>
<div class="abs nw" style="left:638.20px;width:49.00px;overflow:hidden;padding-left:8px;letter-spacing:-0.2px;top:116.93px;font-size:14px;line-height:18px;color:#676a6c">85.27</div>
<div class="abs nw" style="left:688.20px;width:49.00px;overflow:hidden;padding-left:8px;letter-spacing:-0.2px;top:116.93px;font-size:14px;line-height:18px;color:#676a6c">909.73</div>
<div class="abs nw" style="left:738.20px;width:49.00px;overflow:hidden;padding-left:8px;letter-spacing:-0.2px;top:116.93px;font-size:14px;line-height:18px;color:#676a6c">995</div>
<div class="abs nw" style="left:788.20px;width:49.00px;overflow:hidden;padding-left:8px;letter-spacing:-0.2px;top:116.93px;font-size:14px;line-height:18px;color:#676a6c">142.67</div>
<div class="abs nw" style="left:838.20px;width:49.00px;overflow:hidden;padding-left:8px;letter-spacing:-0.2px;top:116.93px;font-size:14px;line-height:18px;color:#676a6c">1404.5</div>
<div class="abs nw" style="left:888.20px;width:49.00px;overflow:hidden;padding-left:8px;letter-spacing:-0.2px;top:116.93px;font-size:14px;line-height:18px;color:#676a6c">1547.2</div>
<div class="abs nw" style="left:938.20px;width:49.00px;overflow:hidden;padding-left:8px;letter-spacing:-0.2px;top:116.93px;font-size:14px;line-height:18px;color:#676a6c">113.6</div>
<div class="abs nw" style="left:988.20px;width:49.00px;overflow:hidden;padding-left:8px;letter-spacing:-0.2px;top:116.93px;font-size:14px;line-height:18px;color:#676a6c">783.93</div>
<div class="abs nw" style="left:1038.20px;width:49.00px;overflow:hidden;padding-left:8px;letter-spacing:-0.2px;top:116.93px;font-size:14px;line-height:18px;color:#676a6c">897.53</div>
<div class="abs nw" style="left:1088.20px;width:49.00px;overflow:hidden;padding-left:8px;letter-spacing:-0.2px;top:116.93px;font-size:14px;line-height:18px;color:#676a6c">188.62</div>
<div class="abs nw" style="left:1138.20px;width:49.00px;overflow:hidden;padding-left:8px;letter-spacing:-0.2px;top:116.93px;font-size:14px;line-height:18px;color:#676a6c">0.598</div>
<div class="abs nw" style="left:1188.20px;width:49.00px;overflow:hidden;padding-left:8px;letter-spacing:-0.2px;top:116.93px;font-size:14px;line-height:18px;color:#676a6c">0.6</div>
<div class="abs nw" style="left:1238.20px;width:49.00px;overflow:hidden;padding-left:8px;letter-spacing:-0.2px;top:116.93px;font-size:14px;line-height:18px;color:#676a6c">1</div>
<div class="abs nw" style="left:1288.20px;width:127.30px;overflow:hidden;padding-left:8px;letter-spacing:-0.2px;top:116.93px;font-size:14px;line-height:18px;color:#676a6c">1710021</div>
<div class="abs nw" style="left:5.00px;width:29.30px;text-align:center;top:152.50px;font-size:14px;line-height:18px;color:#676a6c">4</div>
<div class="abs" style="left:43px;top:155.99849999999998px;width:13px;height:13px;border:1px solid #767676;border-radius:2.5px;background:#fff"></div>
<div class="abs nw" style="left:69.90px;width:66.10px;overflow:hidden;padding-left:8px;letter-spacing:0.5px;top:152.50px;font-size:14px;line-height:18px;color:#676a6c">2022-04-01</div>
<div class="abs nw" style="left:137.00px;width:66.00px;overflow:hidden;padding-left:8px;letter-spacing:0.5px;top:152.50px;font-size:14px;line-height:18px;color:#676a6c">2022-04-</div>
<div class="abs nw" style="left:204.00px;width:65.90px;overflow:hidden;padding-left:8px;letter-spacing:-0.2px;top:152.50px;font-size:14px;line-height:18px;color:#676a6c">02511801</div>
<div class="abs nw" style="left:270.90px;width:66.30px;overflow:hidden;padding-left:8px;letter-spacing:-0.2px;top:152.50px;font-size:14px;line-height:18px;color:#676a6c">1#-东电梯</div>
<div class="abs nw" style="left:338.20px;width:49.00px;overflow:hidden;padding-left:8px;letter-spacing:-0.2px;top:152.50px;font-size:14px;line-height:18px;color:#676a6c">1640.7</div>
<div class="abs nw" style="left:388.20px;width:49.00px;overflow:hidden;padding-left:8px;letter-spacing:-0.2px;top:152.50px;font-size:14px;line-height:18px;color:#676a6c">1776.0</div>
<div class="abs nw" style="left:438.20px;width:49.00px;overflow:hidden;padding-left:8px;letter-spacing:-0.2px;top:152.50px;font-size:14px;line-height:18px;color:#676a6c">135.27</div>
<div class="abs nw" style="left:488.20px;width:49.00px;overflow:hidden;padding-left:8px;letter-spacing:-0.2px;top:152.50px;font-size:14px;line-height:18px;color:#676a6c">0.00</div>
<div class="abs nw" style="left:538.20px;width:49.00px;overflow:hidden;padding-left:8px;letter-spacing:-0.2px;top:152.50px;font-size:14px;line-height:18px;color:#676a6c">0.00</div>
<div class="abs nw" style="left:588.20px;width:49.00px;overflow:hidden;padding-left:8px;letter-spacing:-0.2px;top:152.50px;font-size:14px;line-height:18px;color:#676a6c">0.00</div>
<div class="abs nw" style="left:638.20px;width:49.00px;overflow:hidden;padding-left:8px;letter-spacing:-0.2px;top:152.50px;font-size:14px;line-height:18px;color:#676a6c">33.83</div>
<div class="abs nw" style="left:688.20px;width:49.00px;overflow:hidden;padding-left:8px;letter-spacing:-0.2px;top:152.50px;font-size:14px;line-height:18px;color:#676a6c">525.63</div>
<div class="abs nw" style="left:738.20px;width:49.00px;overflow:hidden;padding-left:8px;letter-spacing:-0.2px;top:152.50px;font-size:14px;line-height:18px;color:#676a6c">559.46</div>
<div class="abs nw" style="left:788.20px;width:49.00px;overflow:hidden;padding-left:8px;letter-spacing:-0.2px;top:152.50px;font-size:14px;line-height:18px;color:#676a6c">56.43</div>
<div class="abs nw" style="left:838.20px;width:49.00px;overflow:hidden;padding-left:8px;letter-spacing:-0.2px;top:152.50px;font-size:14px;line-height:18px;color:#676a6c">780.92</div>
<div class="abs nw" style="left:888.20px;width:49.00px;overflow:hidden;padding-left:8px;letter-spacing:-0.2px;top:152.50px;font-size:14px;line-height:18px;color:#676a6c">837.35</div>
<div class="abs nw" style="left:938.20px;width:49.00px;overflow:hidden;padding-left:8px;letter-spacing:-0.2px;top:152.50px;font-size:14px;line-height:18px;color:#676a6c">45.01</div>
<div class="abs nw" style="left:988.20px;width:49.00px;overflow:hidden;padding-left:8px;letter-spacing:-0.2px;top:152.50px;font-size:14px;line-height:18px;color:#676a6c">334.21</div>
<div class="abs nw" style="left:1038.20px;width:49.00px;overflow:hidden;padding-left:8px;letter-spacing:-0.2px;top:152.50px;font-size:14px;line-height:18px;color:#676a6c">379.22</div>
<div class="abs nw" style="left:1088.20px;width:49.00px;overflow:hidden;padding-left:8px;letter-spacing:-0.2px;top:152.50px;font-size:14px;line-height:18px;color:#676a6c">74.72</div>
<div class="abs nw" style="left:1138.20px;width:49.00px;overflow:hidden;padding-left:8px;letter-spacing:-0.2px;top:152.50px;font-size:14px;line-height:18px;color:#676a6c">0.249</div>
<div class="abs nw" style="left:1188.20px;width:49.00px;overflow:hidden;padding-left:8px;letter-spacing:-0.2px;top:152.50px;font-size:14px;line-height:18px;color:#676a6c">0.25</div>
<div class="abs nw" style="left:1238.20px;width:49.00px;overflow:hidden;padding-left:8px;letter-spacing:-0.2px;top:152.50px;font-size:14px;line-height:18px;color:#676a6c">1</div>
<div class="abs nw" style="left:1288.20px;width:127.30px;overflow:hidden;padding-left:8px;letter-spacing:-0.2px;top:152.50px;font-size:14px;line-height:18px;color:#676a6c">1710010</div>
<div class="abs nw" style="left:5.00px;width:29.30px;text-align:center;top:188.07px;font-size:14px;line-height:18px;color:#676a6c">5</div>
<div class="abs" style="left:43px;top:191.5695px;width:13px;height:13px;border:1px solid #767676;border-radius:2.5px;background:#fff"></div>
<div class="abs nw" style="left:69.90px;width:66.10px;overflow:hidden;padding-left:8px;letter-spacing:0.5px;top:188.07px;font-size:14px;line-height:18px;color:#676a6c">2022-04-01</div>
<div class="abs nw" style="left:137.00px;width:66.00px;overflow:hidden;padding-left:8px;letter-spacing:0.5px;top:188.07px;font-size:14px;line-height:18px;color:#676a6c">2022-04-</div>
<div class="abs nw" style="left:204.00px;width:65.90px;overflow:hidden;padding-left:8px;letter-spacing:-0.2px;top:188.07px;font-size:14px;line-height:18px;color:#676a6c">02503800</div>
<div class="abs nw" style="left:270.90px;width:66.30px;overflow:hidden;padding-left:8px;letter-spacing:-0.2px;top:188.07px;font-size:14px;line-height:18px;color:#676a6c">1#-1FB-5</div>
<div class="abs nw" style="left:338.20px;width:49.00px;overflow:hidden;padding-left:8px;letter-spacing:-0.2px;top:188.07px;font-size:14px;line-height:18px;color:#676a6c">0.30</div>
<div class="abs nw" style="left:388.20px;width:49.00px;overflow:hidden;padding-left:8px;letter-spacing:-0.2px;top:188.07px;font-size:14px;line-height:18px;color:#676a6c">0.30</div>
<div class="abs nw" style="left:438.20px;width:49.00px;overflow:hidden;padding-left:8px;letter-spacing:-0.2px;top:188.07px;font-size:14px;line-height:18px;color:#676a6c">0.00</div>
<div class="abs nw" style="left:488.20px;width:49.00px;overflow:hidden;padding-left:8px;letter-spacing:-0.2px;top:188.07px;font-size:14px;line-height:18px;color:#676a6c">0.00</div>
<div class="abs nw" style="left:538.20px;width:49.00px;overflow:hidden;padding-left:8px;letter-spacing:-0.2px;top:188.07px;font-size:14px;line-height:18px;color:#676a6c">0.00</div>
<div class="abs nw" style="left:588.20px;width:49.00px;overflow:hidden;padding-left:8px;letter-spacing:-0.2px;top:188.07px;font-size:14px;line-height:18px;color:#676a6c">0.00</div>
<div class="abs nw" style="left:638.20px;width:49.00px;overflow:hidden;padding-left:8px;letter-spacing:-0.2px;top:188.07px;font-size:14px;line-height:18px;color:#676a6c">0.00</div>
<div class="abs nw" style="left:688.20px;width:49.00px;overflow:hidden;padding-left:8px;letter-spacing:-0.2px;top:188.07px;font-size:14px;line-height:18px;color:#676a6c">0.00</div>
<div class="abs nw" style="left:738.20px;width:49.00px;overflow:hidden;padding-left:8px;letter-spacing:-0.2px;top:188.07px;font-size:14px;line-height:18px;color:#676a6c">0.00</div>
<div class="abs nw" style="left:788.20px;width:49.00px;overflow:hidden;padding-left:8px;letter-spacing:-0.2px;top:188.07px;font-size:14px;line-height:18px;color:#676a6c">0.00</div>
<div class="abs nw" style="left:838.20px;width:49.00px;overflow:hidden;padding-left:8px;letter-spacing:-0.2px;top:188.07px;font-size:14px;line-height:18px;color:#676a6c">0.3</div>
<div class="abs nw" style="left:888.20px;width:49.00px;overflow:hidden;padding-left:8px;letter-spacing:-0.2px;top:188.07px;font-size:14px;line-height:18px;color:#676a6c">0.3</div>
<div class="abs nw" style="left:938.20px;width:49.00px;overflow:hidden;padding-left:8px;letter-spacing:-0.2px;top:188.07px;font-size:14px;line-height:18px;color:#676a6c">0.00</div>
<div class="abs nw" style="left:988.20px;width:49.00px;overflow:hidden;padding-left:8px;letter-spacing:-0.2px;top:188.07px;font-size:14px;line-height:18px;color:#676a6c">0.00</div>
<div class="abs nw" style="left:1038.20px;width:49.00px;overflow:hidden;padding-left:8px;letter-spacing:-0.2px;top:188.07px;font-size:14px;line-height:18px;color:#676a6c">0.00</div>
<div class="abs nw" style="left:1088.20px;width:49.00px;overflow:hidden;padding-left:8px;letter-spacing:-0.2px;top:188.07px;font-size:14px;line-height:18px;color:#676a6c">0.00</div>
<div class="abs nw" style="left:1138.20px;width:49.00px;overflow:hidden;padding-left:8px;letter-spacing:-0.2px;top:188.07px;font-size:14px;line-height:18px;color:#676a6c">0</div>
<div class="abs nw" style="left:1188.20px;width:49.00px;overflow:hidden;padding-left:8px;letter-spacing:-0.2px;top:188.07px;font-size:14px;line-height:18px;color:#676a6c">0.00</div>
<div class="abs nw" style="left:1238.20px;width:49.00px;overflow:hidden;padding-left:8px;letter-spacing:-0.2px;top:188.07px;font-size:14px;line-height:18px;color:#676a6c">30</div>
<div class="abs nw" style="left:1288.20px;width:127.30px;overflow:hidden;padding-left:8px;letter-spacing:-0.2px;top:188.07px;font-size:14px;line-height:18px;color:#676a6c">1590301</div>
<div class="abs nw" style="left:5.00px;width:29.30px;text-align:center;top:223.64px;font-size:14px;line-height:18px;color:#676a6c">6</div>
<div class="abs" style="left:43px;top:227.14049999999997px;width:13px;height:13px;border:1px solid #767676;border-radius:2.5px;background:#fff"></div>
<div class="abs nw" style="left:69.90px;width:66.10px;overflow:hidden;padding-left:8px;letter-spacing:0.5px;top:223.64px;font-size:14px;line-height:18px;color:#676a6c">2022-04-01</div>
<div class="abs nw" style="left:137.00px;width:66.00px;overflow:hidden;padding-left:8px;letter-spacing:0.5px;top:223.64px;font-size:14px;line-height:18px;color:#676a6c">2022-04-</div>
<div class="abs nw" style="left:204.00px;width:65.90px;overflow:hidden;padding-left:8px;letter-spacing:-0.2px;top:223.64px;font-size:14px;line-height:18px;color:#676a6c">02503800</div>
<div class="abs nw" style="left:270.90px;width:66.30px;overflow:hidden;padding-left:8px;letter-spacing:-0.2px;top:223.64px;font-size:14px;line-height:18px;color:#676a6c">1#-106-3</div>
<div class="abs nw" style="left:338.20px;width:49.00px;overflow:hidden;padding-left:8px;letter-spacing:-0.2px;top:223.64px;font-size:14px;line-height:18px;color:#676a6c">6731.0</div>
<div class="abs nw" style="left:388.20px;width:49.00px;overflow:hidden;padding-left:8px;letter-spacing:-0.2px;top:223.64px;font-size:14px;line-height:18px;color:#676a6c">6873.6</div>
<div class="abs nw" style="left:438.20px;width:49.00px;overflow:hidden;padding-left:8px;letter-spacing:-0.2px;top:223.64px;font-size:14px;line-height:18px;color:#676a6c">142.59</div>
<div class="abs nw" style="left:488.20px;width:49.00px;overflow:hidden;padding-left:8px;letter-spacing:-0.2px;top:223.64px;font-size:14px;line-height:18px;color:#676a6c">0.00</div>
<div class="abs nw" style="left:538.20px;width:49.00px;overflow:hidden;padding-left:8px;letter-spacing:-0.2px;top:223.64px;font-size:14px;line-height:18px;color:#676a6c">0.00</div>
<div class="abs nw" style="left:588.20px;width:49.00px;overflow:hidden;padding-left:8px;letter-spacing:-0.2px;top:223.64px;font-size:14px;line-height:18px;color:#676a6c">0.00</div>
<div class="abs nw" style="left:638.20px;width:49.00px;overflow:hidden;padding-left:8px;letter-spacing:-0.2px;top:223.64px;font-size:14px;line-height:18px;color:#676a6c">35.86</div>
<div class="abs nw" style="left:688.20px;width:49.00px;overflow:hidden;padding-left:8px;letter-spacing:-0.2px;top:223.64px;font-size:14px;line-height:18px;color:#676a6c">1622.4</div>
<div class="abs nw" style="left:738.20px;width:49.00px;overflow:hidden;padding-left:8px;letter-spacing:-0.2px;top:223.64px;font-size:14px;line-height:18px;color:#676a6c">1658.3</div>
<div class="abs nw" style="left:788.20px;width:49.00px;overflow:hidden;padding-left:8px;letter-spacing:-0.2px;top:223.64px;font-size:14px;line-height:18px;color:#676a6c">59.89</div>
<div class="abs nw" style="left:838.20px;width:49.00px;overflow:hidden;padding-left:8px;letter-spacing:-0.2px;top:223.64px;font-size:14px;line-height:18px;color:#676a6c">4707.5</div>
<div class="abs nw" style="left:888.20px;width:49.00px;overflow:hidden;padding-left:8px;letter-spacing:-0.2px;top:223.64px;font-size:14px;line-height:18px;color:#676a6c">4767.4</div>
<div class="abs nw" style="left:938.20px;width:49.00px;overflow:hidden;padding-left:8px;letter-spacing:-0.2px;top:223.64px;font-size:14px;line-height:18px;color:#676a6c">46.84</div>
<div class="abs nw" style="left:988.20px;width:49.00px;overflow:hidden;padding-left:8px;letter-spacing:-0.2px;top:223.64px;font-size:14px;line-height:18px;color:#676a6c">401.07</div>
<div class="abs nw" style="left:1038.20px;width:49.00px;overflow:hidden;padding-left:8px;letter-spacing:-0.2px;top:223.64px;font-size:14px;line-height:18px;color:#676a6c">447.91</div>
<div class="abs nw" style="left:1088.20px;width:49.00px;overflow:hidden;padding-left:8px;letter-spacing:-0.2px;top:223.64px;font-size:14px;line-height:18px;color:#676a6c">79.01</div>
<div class="abs nw" style="left:1138.20px;width:49.00px;overflow:hidden;padding-left:8px;letter-spacing:-0.2px;top:223.64px;font-size:14px;line-height:18px;color:#676a6c">0.517</div>
<div class="abs nw" style="left:1188.20px;width:49.00px;overflow:hidden;padding-left:8px;letter-spacing:-0.2px;top:223.64px;font-size:14px;line-height:18px;color:#676a6c">0.52</div>
<div class="abs nw" style="left:1238.20px;width:49.00px;overflow:hidden;padding-left:8px;letter-spacing:-0.2px;top:223.64px;font-size:14px;line-height:18px;color:#676a6c">1</div>
<div class="abs nw" style="left:1288.20px;width:127.30px;overflow:hidden;padding-left:8px;letter-spacing:-0.2px;top:223.64px;font-size:14px;line-height:18px;color:#676a6c">1590127</div>
<div class="abs nw" style="left:5.00px;width:29.30px;text-align:center;top:259.21px;font-size:14px;line-height:18px;color:#676a6c">7</div>
<div class="abs" style="left:43px;top:262.7114999999999px;width:13px;height:13px;border:1px solid #767676;border-radius:2.5px;background:#fff"></div>
<div class="abs nw" style="left:69.90px;width:66.10px;overflow:hidden;padding-left:8px;letter-spacing:0.5px;top:259.21px;font-size:14px;line-height:18px;color:#676a6c">2022-04-01</div>
<div class="abs nw" style="left:137.00px;width:66.00px;overflow:hidden;padding-left:8px;letter-spacing:0.5px;top:259.21px;font-size:14px;line-height:18px;color:#676a6c">2022-04-</div>
<div class="abs nw" style="left:204.00px;width:65.90px;overflow:hidden;padding-left:8px;letter-spacing:-0.2px;top:259.21px;font-size:14px;line-height:18px;color:#676a6c">02503800</div>
<div class="abs nw" style="left:270.90px;width:66.30px;overflow:hidden;padding-left:8px;letter-spacing:-0.2px;top:259.21px;font-size:14px;line-height:18px;color:#676a6c">1#-1FB-6</div>
<div class="abs nw" style="left:338.20px;width:49.00px;overflow:hidden;padding-left:8px;letter-spacing:-0.2px;top:259.21px;font-size:14px;line-height:18px;color:#676a6c">17349.</div>
<div class="abs nw" style="left:388.20px;width:49.00px;overflow:hidden;padding-left:8px;letter-spacing:-0.2px;top:259.21px;font-size:14px;line-height:18px;color:#676a6c">19216.</div>
<div class="abs nw" style="left:438.20px;width:49.00px;overflow:hidden;padding-left:8px;letter-spacing:-0.2px;top:259.21px;font-size:14px;line-height:18px;color:#676a6c">1867.5</div>
<div class="abs nw" style="left:488.20px;width:49.00px;overflow:hidden;padding-left:8px;letter-spacing:-0.2px;top:259.21px;font-size:14px;line-height:18px;color:#676a6c">0.00</div>
<div class="abs nw" style="left:538.20px;width:49.00px;overflow:hidden;padding-left:8px;letter-spacing:-0.2px;top:259.21px;font-size:14px;line-height:18px;color:#676a6c">0.00</div>
<div class="abs nw" style="left:588.20px;width:49.00px;overflow:hidden;padding-left:8px;letter-spacing:-0.2px;top:259.21px;font-size:14px;line-height:18px;color:#676a6c">0.00</div>
<div class="abs nw" style="left:638.20px;width:49.00px;overflow:hidden;padding-left:8px;letter-spacing:-0.2px;top:259.21px;font-size:14px;line-height:18px;color:#676a6c">463.5</div>
<div class="abs nw" style="left:688.20px;width:49.00px;overflow:hidden;padding-left:8px;letter-spacing:-0.2px;top:259.21px;font-size:14px;line-height:18px;color:#676a6c">4327.8</div>
<div class="abs nw" style="left:738.20px;width:49.00px;overflow:hidden;padding-left:8px;letter-spacing:-0.2px;top:259.21px;font-size:14px;line-height:18px;color:#676a6c">4791.3</div>
<div class="abs nw" style="left:788.20px;width:49.00px;overflow:hidden;padding-left:8px;letter-spacing:-0.2px;top:259.21px;font-size:14px;line-height:18px;color:#676a6c">777</div>
<div class="abs nw" style="left:838.20px;width:49.00px;overflow:hidden;padding-left:8px;letter-spacing:-0.2px;top:259.21px;font-size:14px;line-height:18px;color:#676a6c">7234.2</div>
<div class="abs nw" style="left:888.20px;width:49.00px;overflow:hidden;padding-left:8px;letter-spacing:-0.2px;top:259.21px;font-size:14px;line-height:18px;color:#676a6c">8011.2</div>
<div class="abs nw" style="left:938.20px;width:49.00px;overflow:hidden;padding-left:8px;letter-spacing:-0.2px;top:259.21px;font-size:14px;line-height:18px;color:#676a6c">627</div>
<div class="abs nw" style="left:988.20px;width:49.00px;overflow:hidden;padding-left:8px;letter-spacing:-0.2px;top:259.21px;font-size:14px;line-height:18px;color:#676a6c">5787</div>
<div class="abs nw" style="left:1038.20px;width:49.00px;overflow:hidden;padding-left:8px;letter-spacing:-0.2px;top:259.21px;font-size:14px;line-height:18px;color:#676a6c">6414</div>
<div class="abs nw" style="left:1088.20px;width:49.00px;overflow:hidden;padding-left:8px;letter-spacing:-0.2px;top:259.21px;font-size:14px;line-height:18px;color:#676a6c">1028.6</div>
<div class="abs nw" style="left:1138.20px;width:49.00px;overflow:hidden;padding-left:8px;letter-spacing:-0.2px;top:259.21px;font-size:14px;line-height:18px;color:#676a6c">6.51</div>
<div class="abs nw" style="left:1188.20px;width:49.00px;overflow:hidden;padding-left:8px;letter-spacing:-0.2px;top:259.21px;font-size:14px;line-height:18px;color:#676a6c">6.51</div>
<div class="abs nw" style="left:1238.20px;width:49.00px;overflow:hidden;padding-left:8px;letter-spacing:-0.2px;top:259.21px;font-size:14px;line-height:18px;color:#676a6c">30</div>
<div class="abs nw" style="left:1288.20px;width:127.30px;overflow:hidden;padding-left:8px;letter-spacing:-0.2px;top:259.21px;font-size:14px;line-height:18px;color:#676a6c">1590285</div>
<div class="abs nw" style="left:5.00px;width:29.30px;text-align:center;top:294.78px;font-size:14px;line-height:18px;color:#676a6c">8</div>
<div class="abs" style="left:43px;top:298.2824999999999px;width:13px;height:13px;border:1px solid #767676;border-radius:2.5px;background:#fff"></div>
<div class="abs nw" style="left:69.90px;width:66.10px;overflow:hidden;padding-left:8px;letter-spacing:0.5px;top:294.78px;font-size:14px;line-height:18px;color:#676a6c">2022-04-01</div>
<div class="abs nw" style="left:137.00px;width:66.00px;overflow:hidden;padding-left:8px;letter-spacing:0.5px;top:294.78px;font-size:14px;line-height:18px;color:#676a6c">2022-04-</div>
<div class="abs nw" style="left:204.00px;width:65.90px;overflow:hidden;padding-left:8px;letter-spacing:-0.2px;top:294.78px;font-size:14px;line-height:18px;color:#676a6c">02503800</div>
<div class="abs nw" style="left:270.90px;width:66.30px;overflow:hidden;padding-left:8px;letter-spacing:-0.2px;top:294.78px;font-size:14px;line-height:18px;color:#676a6c">1#-1FB-3</div>
<div class="abs nw" style="left:338.20px;width:49.00px;overflow:hidden;padding-left:8px;letter-spacing:-0.2px;top:294.78px;font-size:14px;line-height:18px;color:#676a6c">1602.4</div>
<div class="abs nw" style="left:388.20px;width:49.00px;overflow:hidden;padding-left:8px;letter-spacing:-0.2px;top:294.78px;font-size:14px;line-height:18px;color:#676a6c">1602.4</div>
<div class="abs nw" style="left:438.20px;width:49.00px;overflow:hidden;padding-left:8px;letter-spacing:-0.2px;top:294.78px;font-size:14px;line-height:18px;color:#676a6c">0.00</div>
<div class="abs nw" style="left:488.20px;width:49.00px;overflow:hidden;padding-left:8px;letter-spacing:-0.2px;top:294.78px;font-size:14px;line-height:18px;color:#676a6c">0.00</div>
<div class="abs nw" style="left:538.20px;width:49.00px;overflow:hidden;padding-left:8px;letter-spacing:-0.2px;top:294.78px;font-size:14px;line-height:18px;color:#676a6c">0.00</div>
<div class="abs nw" style="left:588.20px;width:49.00px;overflow:hidden;padding-left:8px;letter-spacing:-0.2px;top:294.78px;font-size:14px;line-height:18px;color:#676a6c">0.00</div>
<div class="abs nw" style="left:638.20px;width:49.00px;overflow:hidden;padding-left:8px;letter-spacing:-0.2px;top:294.78px;font-size:14px;line-height:18px;color:#676a6c">0.00</div>
<div class="abs nw" style="left:688.20px;width:49.00px;overflow:hidden;padding-left:8px;letter-spacing:-0.2px;top:294.78px;font-size:14px;line-height:18px;color:#676a6c">350</div>
<div class="abs nw" style="left:738.20px;width:49.00px;overflow:hidden;padding-left:8px;letter-spacing:-0.2px;top:294.78px;font-size:14px;line-height:18px;color:#676a6c">350</div>
<div class="abs nw" style="left:788.20px;width:49.00px;overflow:hidden;padding-left:8px;letter-spacing:-0.2px;top:294.78px;font-size:14px;line-height:18px;color:#676a6c">0.00</div>
<div class="abs nw" style="left:838.20px;width:49.00px;overflow:hidden;padding-left:8px;letter-spacing:-0.2px;top:294.78px;font-size:14px;line-height:18px;color:#676a6c">1243.6</div>
<div class="abs nw" style="left:888.20px;width:49.00px;overflow:hidden;padding-left:8px;letter-spacing:-0.2px;top:294.78px;font-size:14px;line-height:18px;color:#676a6c">1243.6</div>
<div class="abs nw" style="left:938.20px;width:49.00px;overflow:hidden;padding-left:8px;letter-spacing:-0.2px;top:294.78px;font-size:14px;line-height:18px;color:#676a6c">0.00</div>
<div class="abs nw" style="left:988.20px;width:49.00px;overflow:hidden;padding-left:8px;letter-spacing:-0.2px;top:294.78px;font-size:14px;line-height:18px;color:#676a6c">8.8</div>
<div class="abs nw" style="left:1038.20px;width:49.00px;overflow:hidden;padding-left:8px;letter-spacing:-0.2px;top:294.78px;font-size:14px;line-height:18px;color:#676a6c">8.8</div>
<div class="abs nw" style="left:1088.20px;width:49.00px;overflow:hidden;padding-left:8px;letter-spacing:-0.2px;top:294.78px;font-size:14px;line-height:18px;color:#676a6c">0.00</div>
<div class="abs nw" style="left:1138.20px;width:49.00px;overflow:hidden;padding-left:8px;letter-spacing:-0.2px;top:294.78px;font-size:14px;line-height:18px;color:#676a6c">0</div>
<div class="abs nw" style="left:1188.20px;width:49.00px;overflow:hidden;padding-left:8px;letter-spacing:-0.2px;top:294.78px;font-size:14px;line-height:18px;color:#676a6c">0.00</div>
<div class="abs nw" style="left:1238.20px;width:49.00px;overflow:hidden;padding-left:8px;letter-spacing:-0.2px;top:294.78px;font-size:14px;line-height:18px;color:#676a6c">40</div>
<div class="abs nw" style="left:1288.20px;width:127.30px;overflow:hidden;padding-left:8px;letter-spacing:-0.2px;top:294.78px;font-size:14px;line-height:18px;color:#676a6c">1590292</div>
<div class="abs nw" style="left:5.00px;width:29.30px;text-align:center;top:330.35px;font-size:14px;line-height:18px;color:#676a6c">9</div>
<div class="abs" style="left:43px;top:333.85349999999994px;width:13px;height:13px;border:1px solid #767676;border-radius:2.5px;background:#fff"></div>
<div class="abs nw" style="left:69.90px;width:66.10px;overflow:hidden;padding-left:8px;letter-spacing:0.5px;top:330.35px;font-size:14px;line-height:18px;color:#676a6c">2022-04-01</div>
<div class="abs nw" style="left:137.00px;width:66.00px;overflow:hidden;padding-left:8px;letter-spacing:0.5px;top:330.35px;font-size:14px;line-height:18px;color:#676a6c">2022-04-</div>
<div class="abs nw" style="left:204.00px;width:65.90px;overflow:hidden;padding-left:8px;letter-spacing:-0.2px;top:330.35px;font-size:14px;line-height:18px;color:#676a6c">02503800</div>
<div class="abs nw" style="left:270.90px;width:66.30px;overflow:hidden;padding-left:8px;letter-spacing:-0.2px;top:330.35px;font-size:14px;line-height:18px;color:#676a6c">1#-1FB-2</div>
<div class="abs nw" style="left:338.20px;width:49.00px;overflow:hidden;padding-left:8px;letter-spacing:-0.2px;top:330.35px;font-size:14px;line-height:18px;color:#676a6c">0.18</div>
<div class="abs nw" style="left:388.20px;width:49.00px;overflow:hidden;padding-left:8px;letter-spacing:-0.2px;top:330.35px;font-size:14px;line-height:18px;color:#676a6c">0.20</div>
<div class="abs nw" style="left:438.20px;width:49.00px;overflow:hidden;padding-left:8px;letter-spacing:-0.2px;top:330.35px;font-size:14px;line-height:18px;color:#676a6c">0.02</div>
<div class="abs nw" style="left:488.20px;width:49.00px;overflow:hidden;padding-left:8px;letter-spacing:-0.2px;top:330.35px;font-size:14px;line-height:18px;color:#676a6c">0.00</div>
<div class="abs nw" style="left:538.20px;width:49.00px;overflow:hidden;padding-left:8px;letter-spacing:-0.2px;top:330.35px;font-size:14px;line-height:18px;color:#676a6c">0.00</div>
<div class="abs nw" style="left:588.20px;width:49.00px;overflow:hidden;padding-left:8px;letter-spacing:-0.2px;top:330.35px;font-size:14px;line-height:18px;color:#676a6c">0.00</div>
<div class="abs nw" style="left:638.20px;width:49.00px;overflow:hidden;padding-left:8px;letter-spacing:-0.2px;top:330.35px;font-size:14px;line-height:18px;color:#676a6c">0.00</div>
<div class="abs nw" style="left:688.20px;width:49.00px;overflow:hidden;padding-left:8px;letter-spacing:-0.2px;top:330.35px;font-size:14px;line-height:18px;color:#676a6c">0.05</div>
<div class="abs nw" style="left:738.20px;width:49.00px;overflow:hidden;padding-left:8px;letter-spacing:-0.2px;top:330.35px;font-size:14px;line-height:18px;color:#676a6c">0.05</div>
<div class="abs nw" style="left:788.20px;width:49.00px;overflow:hidden;padding-left:8px;letter-spacing:-0.2px;top:330.35px;font-size:14px;line-height:18px;color:#676a6c">0.01</div>
<div class="abs nw" style="left:838.20px;width:49.00px;overflow:hidden;padding-left:8px;letter-spacing:-0.2px;top:330.35px;font-size:14px;line-height:18px;color:#676a6c">0.09</div>
<div class="abs nw" style="left:888.20px;width:49.00px;overflow:hidden;padding-left:8px;letter-spacing:-0.2px;top:330.35px;font-size:14px;line-height:18px;color:#676a6c">0.1</div>
<div class="abs nw" style="left:938.20px;width:49.00px;overflow:hidden;padding-left:8px;letter-spacing:-0.2px;top:330.35px;font-size:14px;line-height:18px;color:#676a6c">0.01</div>
<div class="abs nw" style="left:988.20px;width:49.00px;overflow:hidden;padding-left:8px;letter-spacing:-0.2px;top:330.35px;font-size:14px;line-height:18px;color:#676a6c">0.04</div>
<div class="abs nw" style="left:1038.20px;width:49.00px;overflow:hidden;padding-left:8px;letter-spacing:-0.2px;top:330.35px;font-size:14px;line-height:18px;color:#676a6c">0.05</div>
<div class="abs nw" style="left:1088.20px;width:49.00px;overflow:hidden;padding-left:8px;letter-spacing:-0.2px;top:330.35px;font-size:14px;line-height:18px;color:#676a6c">0.01</div>
<div class="abs nw" style="left:1138.20px;width:49.00px;overflow:hidden;padding-left:8px;letter-spacing:-0.2px;top:330.35px;font-size:14px;line-height:18px;color:#676a6c">0</div>
<div class="abs nw" style="left:1188.20px;width:49.00px;overflow:hidden;padding-left:8px;letter-spacing:-0.2px;top:330.35px;font-size:14px;line-height:18px;color:#676a6c">0.00</div>
<div class="abs nw" style="left:1238.20px;width:49.00px;overflow:hidden;padding-left:8px;letter-spacing:-0.2px;top:330.35px;font-size:14px;line-height:18px;color:#676a6c">1</div>
<div class="abs nw" style="left:1288.20px;width:127.30px;overflow:hidden;padding-left:8px;letter-spacing:-0.2px;top:330.35px;font-size:14px;line-height:18px;color:#676a6c">1590101</div>
<div class="abs nw" style="left:5.00px;width:29.30px;text-align:center;top:365.92px;font-size:14px;line-height:18px;color:#676a6c">10</div>
<div class="abs" style="left:43px;top:369.42449999999997px;width:13px;height:13px;border:1px solid #767676;border-radius:2.5px;background:#fff"></div>
<div class="abs nw" style="left:69.90px;width:66.10px;overflow:hidden;padding-left:8px;letter-spacing:0.5px;top:365.92px;font-size:14px;line-height:18px;color:#676a6c">2022-04-01</div>
<div class="abs nw" style="left:137.00px;width:66.00px;overflow:hidden;padding-left:8px;letter-spacing:0.5px;top:365.92px;font-size:14px;line-height:18px;color:#676a6c">2022-04-</div>
<div class="abs nw" style="left:204.00px;width:65.90px;overflow:hidden;padding-left:8px;letter-spacing:-0.2px;top:365.92px;font-size:14px;line-height:18px;color:#676a6c">02503800</div>
<div class="abs nw" style="left:270.90px;width:66.30px;overflow:hidden;padding-left:8px;letter-spacing:-0.2px;top:365.92px;font-size:14px;line-height:18px;color:#676a6c">1#-1FB-1</div>
<div class="abs nw" style="left:338.20px;width:49.00px;overflow:hidden;padding-left:8px;letter-spacing:-0.2px;top:365.92px;font-size:14px;line-height:18px;color:#676a6c">71247.</div>
<div class="abs nw" style="left:388.20px;width:49.00px;overflow:hidden;padding-left:8px;letter-spacing:-0.2px;top:365.92px;font-size:14px;line-height:18px;color:#676a6c">78372.</div>
<div class="abs nw" style="left:438.20px;width:49.00px;overflow:hidden;padding-left:8px;letter-spacing:-0.2px;top:365.92px;font-size:14px;line-height:18px;color:#676a6c">7124.8</div>
<div class="abs nw" style="left:488.20px;width:49.00px;overflow:hidden;padding-left:8px;letter-spacing:-0.2px;top:365.92px;font-size:14px;line-height:18px;color:#676a6c">0.00</div>
<div class="abs nw" style="left:538.20px;width:49.00px;overflow:hidden;padding-left:8px;letter-spacing:-0.2px;top:365.92px;font-size:14px;line-height:18px;color:#676a6c">0.00</div>
<div class="abs nw" style="left:588.20px;width:49.00px;overflow:hidden;padding-left:8px;letter-spacing:-0.2px;top:365.92px;font-size:14px;line-height:18px;color:#676a6c">0.00</div>
<div class="abs nw" style="left:638.20px;width:49.00px;overflow:hidden;padding-left:8px;letter-spacing:-0.2px;top:365.92px;font-size:14px;line-height:18px;color:#676a6c">1997.6</div>
<div class="abs nw" style="left:688.20px;width:49.00px;overflow:hidden;padding-left:8px;letter-spacing:-0.2px;top:365.92px;font-size:14px;line-height:18px;color:#676a6c">20196.</div>
<div class="abs nw" style="left:738.20px;width:49.00px;overflow:hidden;padding-left:8px;letter-spacing:-0.2px;top:365.92px;font-size:14px;line-height:18px;color:#676a6c">22194.</div>
<div class="abs nw" style="left:788.20px;width:49.00px;overflow:hidden;padding-left:8px;letter-spacing:-0.2px;top:365.92px;font-size:14px;line-height:18px;color:#676a6c">3112</div>
<div class="abs nw" style="left:838.20px;width:49.00px;overflow:hidden;padding-left:8px;letter-spacing:-0.2px;top:365.92px;font-size:14px;line-height:18px;color:#676a6c">34072.</div>
<div class="abs nw" style="left:888.20px;width:49.00px;overflow:hidden;padding-left:8px;letter-spacing:-0.2px;top:365.92px;font-size:14px;line-height:18px;color:#676a6c">37184.</div>
<div class="abs nw" style="left:938.20px;width:49.00px;overflow:hidden;padding-left:8px;letter-spacing:-0.2px;top:365.92px;font-size:14px;line-height:18px;color:#676a6c">2015.2</div>
<div class="abs nw" style="left:988.20px;width:49.00px;overflow:hidden;padding-left:8px;letter-spacing:-0.2px;top:365.92px;font-size:14px;line-height:18px;color:#676a6c">16977.</div>
<div class="abs nw" style="left:1038.20px;width:49.00px;overflow:hidden;padding-left:8px;letter-spacing:-0.2px;top:365.92px;font-size:14px;line-height:18px;color:#676a6c">18992.</div>
<div class="abs nw" style="left:1088.20px;width:49.00px;overflow:hidden;padding-left:8px;letter-spacing:-0.2px;top:365.92px;font-size:14px;line-height:18px;color:#676a6c">4114.8</div>
<div class="abs nw" style="left:1138.20px;width:49.00px;overflow:hidden;padding-left:8px;letter-spacing:-0.2px;top:365.92px;font-size:14px;line-height:18px;color:#676a6c">17.76</div>
<div class="abs nw" style="left:1188.20px;width:49.00px;overflow:hidden;padding-left:8px;letter-spacing:-0.2px;top:365.92px;font-size:14px;line-height:18px;color:#676a6c">17.76</div>
<div class="abs nw" style="left:1238.20px;width:49.00px;overflow:hidden;padding-left:8px;letter-spacing:-0.2px;top:365.92px;font-size:14px;line-height:18px;color:#676a6c">80</div>
<div class="abs nw" style="left:1288.20px;width:127.30px;overflow:hidden;padding-left:8px;letter-spacing:-0.2px;top:365.92px;font-size:14px;line-height:18px;color:#676a6c">1590240</div>
<div class="abs nw" style="left:5.00px;width:29.30px;text-align:center;top:401.50px;font-size:14px;line-height:18px;color:#676a6c">11</div>
<div class="abs" style="left:43px;top:404.9955px;width:13px;height:13px;border:1px solid #767676;border-radius:2.5px;background:#fff"></div>
<div class="abs nw" style="left:69.90px;width:66.10px;overflow:hidden;padding-left:8px;letter-spacing:0.5px;top:401.50px;font-size:14px;line-height:18px;color:#676a6c">2022-04-01</div>
<div class="abs nw" style="left:137.00px;width:66.00px;overflow:hidden;padding-left:8px;letter-spacing:0.5px;top:401.50px;font-size:14px;line-height:18px;color:#676a6c">2022-04-</div>
<div class="abs nw" style="left:204.00px;width:65.90px;overflow:hidden;padding-left:8px;letter-spacing:-0.2px;top:401.50px;font-size:14px;line-height:18px;color:#676a6c">02503800</div>
<div class="abs nw" style="left:270.90px;width:66.30px;overflow:hidden;padding-left:8px;letter-spacing:-0.2px;top:401.50px;font-size:14px;line-height:18px;color:#676a6c">1#-2FB-3</div>
<div class="abs nw" style="left:338.20px;width:49.00px;overflow:hidden;padding-left:8px;letter-spacing:-0.2px;top:401.50px;font-size:14px;line-height:18px;color:#676a6c">43728.</div>
<div class="abs nw" style="left:388.20px;width:49.00px;overflow:hidden;padding-left:8px;letter-spacing:-0.2px;top:401.50px;font-size:14px;line-height:18px;color:#676a6c">45120.</div>
<div class="abs nw" style="left:438.20px;width:49.00px;overflow:hidden;padding-left:8px;letter-spacing:-0.2px;top:401.50px;font-size:14px;line-height:18px;color:#676a6c">1391.4</div>
<div class="abs nw" style="left:488.20px;width:49.00px;overflow:hidden;padding-left:8px;letter-spacing:-0.2px;top:401.50px;font-size:14px;line-height:18px;color:#676a6c">0.00</div>
<div class="abs nw" style="left:538.20px;width:49.00px;overflow:hidden;padding-left:8px;letter-spacing:-0.2px;top:401.50px;font-size:14px;line-height:18px;color:#676a6c">0.00</div>
<div class="abs nw" style="left:588.20px;width:49.00px;overflow:hidden;padding-left:8px;letter-spacing:-0.2px;top:401.50px;font-size:14px;line-height:18px;color:#676a6c">0.00</div>
<div class="abs nw" style="left:638.20px;width:49.00px;overflow:hidden;padding-left:8px;letter-spacing:-0.2px;top:401.50px;font-size:14px;line-height:18px;color:#676a6c">342.6</div>
<div class="abs nw" style="left:688.20px;width:49.00px;overflow:hidden;padding-left:8px;letter-spacing:-0.2px;top:401.50px;font-size:14px;line-height:18px;color:#676a6c">15087</div>
<div class="abs nw" style="left:738.20px;width:49.00px;overflow:hidden;padding-left:8px;letter-spacing:-0.2px;top:401.50px;font-size:14px;line-height:18px;color:#676a6c">15429.</div>
<div class="abs nw" style="left:788.20px;width:49.00px;overflow:hidden;padding-left:8px;letter-spacing:-0.2px;top:401.50px;font-size:14px;line-height:18px;color:#676a6c">588</div>
<div class="abs nw" style="left:838.20px;width:49.00px;overflow:hidden;padding-left:8px;letter-spacing:-0.2px;top:401.50px;font-size:14px;line-height:18px;color:#676a6c">25321.</div>
<div class="abs nw" style="left:888.20px;width:49.00px;overflow:hidden;padding-left:8px;letter-spacing:-0.2px;top:401.50px;font-size:14px;line-height:18px;color:#676a6c">25909.</div>
<div class="abs nw" style="left:938.20px;width:49.00px;overflow:hidden;padding-left:8px;letter-spacing:-0.2px;top:401.50px;font-size:14px;line-height:18px;color:#676a6c">460.8</div>
<div class="abs nw" style="left:988.20px;width:49.00px;overflow:hidden;padding-left:8px;letter-spacing:-0.2px;top:401.50px;font-size:14px;line-height:18px;color:#676a6c">3319.8</div>
<div class="abs nw" style="left:1038.20px;width:49.00px;overflow:hidden;padding-left:8px;letter-spacing:-0.2px;top:401.50px;font-size:14px;line-height:18px;color:#676a6c">3780.6</div>
<div class="abs nw" style="left:1088.20px;width:49.00px;overflow:hidden;padding-left:8px;letter-spacing:-0.2px;top:401.50px;font-size:14px;line-height:18px;color:#676a6c">767.32</div>
<div class="abs nw" style="left:1138.20px;width:49.00px;overflow:hidden;padding-left:8px;letter-spacing:-0.2px;top:401.50px;font-size:14px;line-height:18px;color:#676a6c">4.62</div>
<div class="abs nw" style="left:1188.20px;width:49.00px;overflow:hidden;padding-left:8px;letter-spacing:-0.2px;top:401.50px;font-size:14px;line-height:18px;color:#676a6c">4.62</div>
<div class="abs nw" style="left:1238.20px;width:49.00px;overflow:hidden;padding-left:8px;letter-spacing:-0.2px;top:401.50px;font-size:14px;line-height:18px;color:#676a6c">60</div>
<div class="abs nw" style="left:1288.20px;width:127.30px;overflow:hidden;padding-left:8px;letter-spacing:-0.2px;top:401.50px;font-size:14px;line-height:18px;color:#676a6c">1590243</div>
<div class="abs nw" style="left:5.00px;width:29.30px;text-align:center;top:437.07px;font-size:14px;line-height:18px;color:#676a6c">12</div>
<div class="abs" style="left:43px;top:440.5664999999999px;width:13px;height:13px;border:1px solid #767676;border-radius:2.5px;background:#fff"></div>
<div class="abs nw" style="left:69.90px;width:66.10px;overflow:hidden;padding-left:8px;letter-spacing:0.5px;top:437.07px;font-size:14px;line-height:18px;color:#676a6c">2022-04-01</div>
<div class="abs nw" style="left:137.00px;width:66.00px;overflow:hidden;padding-left:8px;letter-spacing:0.5px;top:437.07px;font-size:14px;line-height:18px;color:#676a6c">2022-04-</div>
<div class="abs nw" style="left:204.00px;width:65.90px;overflow:hidden;padding-left:8px;letter-spacing:-0.2px;top:437.07px;font-size:14px;line-height:18px;color:#676a6c">02503800</div>
<div class="abs nw" style="left:270.90px;width:66.30px;overflow:hidden;padding-left:8px;letter-spacing:-0.2px;top:437.07px;font-size:14px;line-height:18px;color:#676a6c">1#-2FB-4</div>
<div class="abs nw" style="left:338.20px;width:49.00px;overflow:hidden;padding-left:8px;letter-spacing:-0.2px;top:437.07px;font-size:14px;line-height:18px;color:#676a6c">10151.</div>
<div class="abs nw" style="left:388.20px;width:49.00px;overflow:hidden;padding-left:8px;letter-spacing:-0.2px;top:437.07px;font-size:14px;line-height:18px;color:#676a6c">10480.</div>
<div class="abs nw" style="left:438.20px;width:49.00px;overflow:hidden;padding-left:8px;letter-spacing:-0.2px;top:437.07px;font-size:14px;line-height:18px;color:#676a6c">329.7</div>
<div class="abs nw" style="left:488.20px;width:49.00px;overflow:hidden;padding-left:8px;letter-spacing:-0.2px;top:437.07px;font-size:14px;line-height:18px;color:#676a6c">0.00</div>
<div class="abs nw" style="left:538.20px;width:49.00px;overflow:hidden;padding-left:8px;letter-spacing:-0.2px;top:437.07px;font-size:14px;line-height:18px;color:#676a6c">0.00</div>
<div class="abs nw" style="left:588.20px;width:49.00px;overflow:hidden;padding-left:8px;letter-spacing:-0.2px;top:437.07px;font-size:14px;line-height:18px;color:#676a6c">0.00</div>
<div class="abs nw" style="left:638.20px;width:49.00px;overflow:hidden;padding-left:8px;letter-spacing:-0.2px;top:437.07px;font-size:14px;line-height:18px;color:#676a6c">82.8</div>
<div class="abs nw" style="left:688.20px;width:49.00px;overflow:hidden;padding-left:8px;letter-spacing:-0.2px;top:437.07px;font-size:14px;line-height:18px;color:#676a6c">3217.8</div>
<div class="abs nw" style="left:738.20px;width:49.00px;overflow:hidden;padding-left:8px;letter-spacing:-0.2px;top:437.07px;font-size:14px;line-height:18px;color:#676a6c">3300.6</div>
<div class="abs nw" style="left:788.20px;width:49.00px;overflow:hidden;padding-left:8px;letter-spacing:-0.2px;top:437.07px;font-size:14px;line-height:18px;color:#676a6c">137.4</div>
<div class="abs nw" style="left:838.20px;width:49.00px;overflow:hidden;padding-left:8px;letter-spacing:-0.2px;top:437.07px;font-size:14px;line-height:18px;color:#676a6c">5984.1</div>
<div class="abs nw" style="left:888.20px;width:49.00px;overflow:hidden;padding-left:8px;letter-spacing:-0.2px;top:437.07px;font-size:14px;line-height:18px;color:#676a6c">6121.5</div>
<div class="abs nw" style="left:938.20px;width:49.00px;overflow:hidden;padding-left:8px;letter-spacing:-0.2px;top:437.07px;font-size:14px;line-height:18px;color:#676a6c">109.5</div>
<div class="abs nw" style="left:988.20px;width:49.00px;overflow:hidden;padding-left:8px;letter-spacing:-0.2px;top:437.07px;font-size:14px;line-height:18px;color:#676a6c">949.2</div>
<div class="abs nw" style="left:1038.20px;width:49.00px;overflow:hidden;padding-left:8px;letter-spacing:-0.2px;top:437.07px;font-size:14px;line-height:18px;color:#676a6c">1058.7</div>
<div class="abs nw" style="left:1088.20px;width:49.00px;overflow:hidden;padding-left:8px;letter-spacing:-0.2px;top:437.07px;font-size:14px;line-height:18px;color:#676a6c">182.3</div>
<div class="abs nw" style="left:1138.20px;width:49.00px;overflow:hidden;padding-left:8px;letter-spacing:-0.2px;top:437.07px;font-size:14px;line-height:18px;color:#676a6c">0.6</div>
<div class="abs nw" style="left:1188.20px;width:49.00px;overflow:hidden;padding-left:8px;letter-spacing:-0.2px;top:437.07px;font-size:14px;line-height:18px;color:#676a6c">0.6</div>
<div class="abs nw" style="left:1238.20px;width:49.00px;overflow:hidden;padding-left:8px;letter-spacing:-0.2px;top:437.07px;font-size:14px;line-height:18px;color:#676a6c">30</div>
<div class="abs nw" style="left:1288.20px;width:127.30px;overflow:hidden;padding-left:8px;letter-spacing:-0.2px;top:437.07px;font-size:14px;line-height:18px;color:#676a6c">1590319</div>
<div class="abs nw" style="left:5.00px;width:29.30px;text-align:center;top:472.64px;font-size:14px;line-height:18px;color:#676a6c">13</div>
<div class="abs" style="left:43px;top:476.13749999999993px;width:13px;height:13px;border:1px solid #767676;border-radius:2.5px;background:#fff"></div>
<div class="abs nw" style="left:69.90px;width:66.10px;overflow:hidden;padding-left:8px;letter-spacing:0.5px;top:472.64px;font-size:14px;line-height:18px;color:#676a6c">2022-04-01</div>
<div class="abs nw" style="left:137.00px;width:66.00px;overflow:hidden;padding-left:8px;letter-spacing:0.5px;top:472.64px;font-size:14px;line-height:18px;color:#676a6c">2022-04-</div>
<div class="abs nw" style="left:204.00px;width:65.90px;overflow:hidden;padding-left:8px;letter-spacing:-0.2px;top:472.64px;font-size:14px;line-height:18px;color:#676a6c">02503800</div>
<div class="abs nw" style="left:270.90px;width:66.30px;overflow:hidden;padding-left:8px;letter-spacing:-0.2px;top:472.64px;font-size:14px;line-height:18px;color:#676a6c">1#-2FB-2</div>
<div class="abs nw" style="left:338.20px;width:49.00px;overflow:hidden;padding-left:8px;letter-spacing:-0.2px;top:472.64px;font-size:14px;line-height:18px;color:#676a6c">6405.1</div>
<div class="abs nw" style="left:388.20px;width:49.00px;overflow:hidden;padding-left:8px;letter-spacing:-0.2px;top:472.64px;font-size:14px;line-height:18px;color:#676a6c">6734.8</div>
<div class="abs nw" style="left:438.20px;width:49.00px;overflow:hidden;padding-left:8px;letter-spacing:-0.2px;top:472.64px;font-size:14px;line-height:18px;color:#676a6c">329.72</div>
<div class="abs nw" style="left:488.20px;width:49.00px;overflow:hidden;padding-left:8px;letter-spacing:-0.2px;top:472.64px;font-size:14px;line-height:18px;color:#676a6c">0.00</div>
<div class="abs nw" style="left:538.20px;width:49.00px;overflow:hidden;padding-left:8px;letter-spacing:-0.2px;top:472.64px;font-size:14px;line-height:18px;color:#676a6c">0.00</div>
<div class="abs nw" style="left:588.20px;width:49.00px;overflow:hidden;padding-left:8px;letter-spacing:-0.2px;top:472.64px;font-size:14px;line-height:18px;color:#676a6c">0.00</div>
<div class="abs nw" style="left:638.20px;width:49.00px;overflow:hidden;padding-left:8px;letter-spacing:-0.2px;top:472.64px;font-size:14px;line-height:18px;color:#676a6c">81.85</div>
<div class="abs nw" style="left:688.20px;width:49.00px;overflow:hidden;padding-left:8px;letter-spacing:-0.2px;top:472.64px;font-size:14px;line-height:18px;color:#676a6c">1606.2</div>
<div class="abs nw" style="left:738.20px;width:49.00px;overflow:hidden;padding-left:8px;letter-spacing:-0.2px;top:472.64px;font-size:14px;line-height:18px;color:#676a6c">1688.1</div>
<div class="abs nw" style="left:788.20px;width:49.00px;overflow:hidden;padding-left:8px;letter-spacing:-0.2px;top:472.64px;font-size:14px;line-height:18px;color:#676a6c">138.8</div>
<div class="abs nw" style="left:838.20px;width:49.00px;overflow:hidden;padding-left:8px;letter-spacing:-0.2px;top:472.64px;font-size:14px;line-height:18px;color:#676a6c">2657.6</div>
<div class="abs nw" style="left:888.20px;width:49.00px;overflow:hidden;padding-left:8px;letter-spacing:-0.2px;top:472.64px;font-size:14px;line-height:18px;color:#676a6c">2796.4</div>
<div class="abs nw" style="left:938.20px;width:49.00px;overflow:hidden;padding-left:8px;letter-spacing:-0.2px;top:472.64px;font-size:14px;line-height:18px;color:#676a6c">109.07</div>
<div class="abs nw" style="left:988.20px;width:49.00px;overflow:hidden;padding-left:8px;letter-spacing:-0.2px;top:472.64px;font-size:14px;line-height:18px;color:#676a6c">2141.2</div>
<div class="abs nw" style="left:1038.20px;width:49.00px;overflow:hidden;padding-left:8px;letter-spacing:-0.2px;top:472.64px;font-size:14px;line-height:18px;color:#676a6c">2250.3</div>
<div class="abs nw" style="left:1088.20px;width:49.00px;overflow:hidden;padding-left:8px;letter-spacing:-0.2px;top:472.64px;font-size:14px;line-height:18px;color:#676a6c">182.1</div>
<div class="abs nw" style="left:1138.20px;width:49.00px;overflow:hidden;padding-left:8px;letter-spacing:-0.2px;top:472.64px;font-size:14px;line-height:18px;color:#676a6c">1.742</div>
<div class="abs nw" style="left:1188.20px;width:49.00px;overflow:hidden;padding-left:8px;letter-spacing:-0.2px;top:472.64px;font-size:14px;line-height:18px;color:#676a6c">1.74</div>
<div class="abs nw" style="left:1238.20px;width:49.00px;overflow:hidden;padding-left:8px;letter-spacing:-0.2px;top:472.64px;font-size:14px;line-height:18px;color:#676a6c">1</div>
<div class="abs nw" style="left:1288.20px;width:127.30px;overflow:hidden;padding-left:8px;letter-spacing:-0.2px;top:472.64px;font-size:14px;line-height:18px;color:#676a6c">1590120</div>
<div class="abs nw" style="left:5.00px;width:29.30px;text-align:center;top:508.21px;font-size:14px;line-height:18px;color:#676a6c">14</div>
<div class="abs" style="left:43px;top:511.70849999999996px;width:13px;height:13px;border:1px solid #767676;border-radius:2.5px;background:#fff"></div>
<div class="abs nw" style="left:69.90px;width:66.10px;overflow:hidden;padding-left:8px;letter-spacing:0.5px;top:508.21px;font-size:14px;line-height:18px;color:#676a6c">2022-04-01</div>
<div class="abs nw" style="left:137.00px;width:66.00px;overflow:hidden;padding-left:8px;letter-spacing:0.5px;top:508.21px;font-size:14px;line-height:18px;color:#676a6c">2022-04-</div>
<div class="abs nw" style="left:204.00px;width:65.90px;overflow:hidden;padding-left:8px;letter-spacing:-0.2px;top:508.21px;font-size:14px;line-height:18px;color:#676a6c">02503800</div>
<div class="abs nw" style="left:270.90px;width:66.30px;overflow:hidden;padding-left:8px;letter-spacing:-0.2px;top:508.21px;font-size:14px;line-height:18px;color:#676a6c">1#-2FB-1</div>
<div class="abs nw" style="left:338.20px;width:49.00px;overflow:hidden;padding-left:8px;letter-spacing:-0.2px;top:508.21px;font-size:14px;line-height:18px;color:#676a6c">169.03</div>
<div class="abs nw" style="left:388.20px;width:49.00px;overflow:hidden;padding-left:8px;letter-spacing:-0.2px;top:508.21px;font-size:14px;line-height:18px;color:#676a6c">195.69</div>
<div class="abs nw" style="left:438.20px;width:49.00px;overflow:hidden;padding-left:8px;letter-spacing:-0.2px;top:508.21px;font-size:14px;line-height:18px;color:#676a6c">26.66</div>
<div class="abs nw" style="left:488.20px;width:49.00px;overflow:hidden;padding-left:8px;letter-spacing:-0.2px;top:508.21px;font-size:14px;line-height:18px;color:#676a6c">0.00</div>
<div class="abs nw" style="left:538.20px;width:49.00px;overflow:hidden;padding-left:8px;letter-spacing:-0.2px;top:508.21px;font-size:14px;line-height:18px;color:#676a6c">0.00</div>
<div class="abs nw" style="left:588.20px;width:49.00px;overflow:hidden;padding-left:8px;letter-spacing:-0.2px;top:508.21px;font-size:14px;line-height:18px;color:#676a6c">0.00</div>
<div class="abs nw" style="left:638.20px;width:49.00px;overflow:hidden;padding-left:8px;letter-spacing:-0.2px;top:508.21px;font-size:14px;line-height:18px;color:#676a6c">6.55</div>
<div class="abs nw" style="left:688.20px;width:49.00px;overflow:hidden;padding-left:8px;letter-spacing:-0.2px;top:508.21px;font-size:14px;line-height:18px;color:#676a6c">37.43</div>
<div class="abs nw" style="left:738.20px;width:49.00px;overflow:hidden;padding-left:8px;letter-spacing:-0.2px;top:508.21px;font-size:14px;line-height:18px;color:#676a6c">43.98</div>
<div class="abs nw" style="left:788.20px;width:49.00px;overflow:hidden;padding-left:8px;letter-spacing:-0.2px;top:508.21px;font-size:14px;line-height:18px;color:#676a6c">11.16</div>
<div class="abs nw" style="left:838.20px;width:49.00px;overflow:hidden;padding-left:8px;letter-spacing:-0.2px;top:508.21px;font-size:14px;line-height:18px;color:#676a6c">102.96</div>
<div class="abs nw" style="left:888.20px;width:49.00px;overflow:hidden;padding-left:8px;letter-spacing:-0.2px;top:508.21px;font-size:14px;line-height:18px;color:#676a6c">114.12</div>
<div class="abs nw" style="left:938.20px;width:49.00px;overflow:hidden;padding-left:8px;letter-spacing:-0.2px;top:508.21px;font-size:14px;line-height:18px;color:#676a6c">8.95</div>
<div class="abs nw" style="left:988.20px;width:49.00px;overflow:hidden;padding-left:8px;letter-spacing:-0.2px;top:508.21px;font-size:14px;line-height:18px;color:#676a6c">28.64</div>
<div class="abs nw" style="left:1038.20px;width:49.00px;overflow:hidden;padding-left:8px;letter-spacing:-0.2px;top:508.21px;font-size:14px;line-height:18px;color:#676a6c">37.59</div>
<div class="abs nw" style="left:1088.20px;width:49.00px;overflow:hidden;padding-left:8px;letter-spacing:-0.2px;top:508.21px;font-size:14px;line-height:18px;color:#676a6c">14.66</div>
<div class="abs nw" style="left:1138.20px;width:49.00px;overflow:hidden;padding-left:8px;letter-spacing:-0.2px;top:508.21px;font-size:14px;line-height:18px;color:#676a6c">0.047</div>
<div class="abs nw" style="left:1188.20px;width:49.00px;overflow:hidden;padding-left:8px;letter-spacing:-0.2px;top:508.21px;font-size:14px;line-height:18px;color:#676a6c">0.05</div>
<div class="abs nw" style="left:1238.20px;width:49.00px;overflow:hidden;padding-left:8px;letter-spacing:-0.2px;top:508.21px;font-size:14px;line-height:18px;color:#676a6c">1</div>
<div class="abs nw" style="left:1288.20px;width:127.30px;overflow:hidden;padding-left:8px;letter-spacing:-0.2px;top:508.21px;font-size:14px;line-height:18px;color:#676a6c">1590136</div>
<div class="abs nw" style="left:5.00px;width:29.30px;text-align:center;top:543.78px;font-size:14px;line-height:18px;color:#676a6c">15</div>
<div class="abs" style="left:43px;top:547.2794999999999px;width:13px;height:13px;border:1px solid #767676;border-radius:2.5px;background:#fff"></div>
<div class="abs nw" style="left:69.90px;width:66.10px;overflow:hidden;padding-left:8px;letter-spacing:0.5px;top:543.78px;font-size:14px;line-height:18px;color:#676a6c">2022-04-01</div>
<div class="abs nw" style="left:137.00px;width:66.00px;overflow:hidden;padding-left:8px;letter-spacing:0.5px;top:543.78px;font-size:14px;line-height:18px;color:#676a6c">2022-04-</div>
<div class="abs nw" style="left:204.00px;width:65.90px;overflow:hidden;padding-left:8px;letter-spacing:-0.2px;top:543.78px;font-size:14px;line-height:18px;color:#676a6c">02503700</div>
<div class="abs nw" style="left:270.90px;width:66.30px;overflow:hidden;padding-left:8px;letter-spacing:-0.2px;top:543.78px;font-size:14px;line-height:18px;color:#676a6c">1#-3FB-7</div>
<div class="abs nw" style="left:338.20px;width:49.00px;overflow:hidden;padding-left:8px;letter-spacing:-0.2px;top:543.78px;font-size:14px;line-height:18px;color:#676a6c">30172.</div>
<div class="abs nw" style="left:388.20px;width:49.00px;overflow:hidden;padding-left:8px;letter-spacing:-0.2px;top:543.78px;font-size:14px;line-height:18px;color:#676a6c">31954.</div>
<div class="abs nw" style="left:438.20px;width:49.00px;overflow:hidden;padding-left:8px;letter-spacing:-0.2px;top:543.78px;font-size:14px;line-height:18px;color:#676a6c">1781.2</div>
<div class="abs nw" style="left:488.20px;width:49.00px;overflow:hidden;padding-left:8px;letter-spacing:-0.2px;top:543.78px;font-size:14px;line-height:18px;color:#676a6c">0.00</div>
<div class="abs nw" style="left:538.20px;width:49.00px;overflow:hidden;padding-left:8px;letter-spacing:-0.2px;top:543.78px;font-size:14px;line-height:18px;color:#676a6c">0.00</div>
<div class="abs nw" style="left:588.20px;width:49.00px;overflow:hidden;padding-left:8px;letter-spacing:-0.2px;top:543.78px;font-size:14px;line-height:18px;color:#676a6c">0.00</div>
<div class="abs nw" style="left:638.20px;width:49.00px;overflow:hidden;padding-left:8px;letter-spacing:-0.2px;top:543.78px;font-size:14px;line-height:18px;color:#676a6c">460.8</div>
<div class="abs nw" style="left:688.20px;width:49.00px;overflow:hidden;padding-left:8px;letter-spacing:-0.2px;top:543.78px;font-size:14px;line-height:18px;color:#676a6c">9043.2</div>
<div class="abs nw" style="left:738.20px;width:49.00px;overflow:hidden;padding-left:8px;letter-spacing:-0.2px;top:543.78px;font-size:14px;line-height:18px;color:#676a6c">9504</div>
<div class="abs nw" style="left:788.20px;width:49.00px;overflow:hidden;padding-left:8px;letter-spacing:-0.2px;top:543.78px;font-size:14px;line-height:18px;color:#676a6c">772</div>
<div class="abs nw" style="left:838.20px;width:49.00px;overflow:hidden;padding-left:8px;letter-spacing:-0.2px;top:543.78px;font-size:14px;line-height:18px;color:#676a6c">17027.</div>
<div class="abs nw" style="left:888.20px;width:49.00px;overflow:hidden;padding-left:8px;letter-spacing:-0.2px;top:543.78px;font-size:14px;line-height:18px;color:#676a6c">17799.</div>
<div class="abs nw" style="left:938.20px;width:49.00px;overflow:hidden;padding-left:8px;letter-spacing:-0.2px;top:543.78px;font-size:14px;line-height:18px;color:#676a6c">548.4</div>
<div class="abs nw" style="left:988.20px;width:49.00px;overflow:hidden;padding-left:8px;letter-spacing:-0.2px;top:543.78px;font-size:14px;line-height:18px;color:#676a6c">4102.4</div>
<div class="abs nw" style="left:1038.20px;width:49.00px;overflow:hidden;padding-left:8px;letter-spacing:-0.2px;top:543.78px;font-size:14px;line-height:18px;color:#676a6c">4650.8</div>
<div class="abs nw" style="left:1088.20px;width:49.00px;overflow:hidden;padding-left:8px;letter-spacing:-0.2px;top:543.78px;font-size:14px;line-height:18px;color:#676a6c">1002.1</div>
<div class="abs nw" style="left:1138.20px;width:49.00px;overflow:hidden;padding-left:8px;letter-spacing:-0.2px;top:543.78px;font-size:14px;line-height:18px;color:#676a6c">4.32</div>
<div class="abs nw" style="left:1188.20px;width:49.00px;overflow:hidden;padding-left:8px;letter-spacing:-0.2px;top:543.78px;font-size:14px;line-height:18px;color:#676a6c">4.32</div>
<div class="abs nw" style="left:1238.20px;width:49.00px;overflow:hidden;padding-left:8px;letter-spacing:-0.2px;top:543.78px;font-size:14px;line-height:18px;color:#676a6c">40</div>
<div class="abs nw" style="left:1288.20px;width:127.30px;overflow:hidden;padding-left:8px;letter-spacing:-0.2px;top:543.78px;font-size:14px;line-height:18px;color:#676a6c">1590248</div>
</div>
<div class="abs" style="left:1649px;top:280px;width:1px;height:600px;background:#e2e2e2"></div>
</body></html>
